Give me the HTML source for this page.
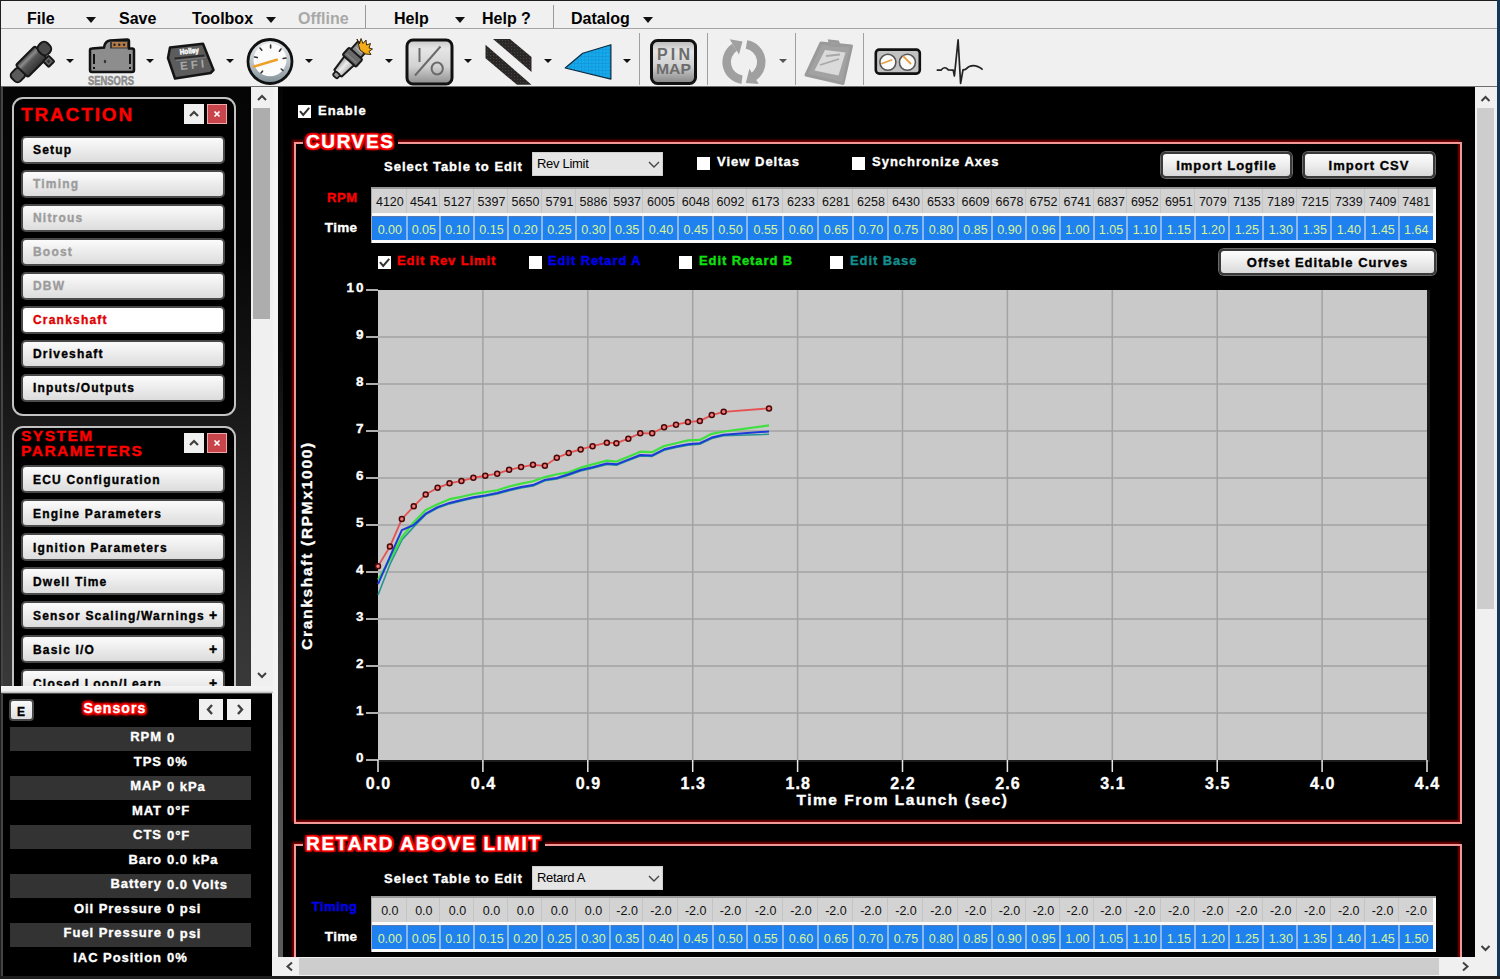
<!DOCTYPE html>
<html><head><meta charset="utf-8"><title>Traction</title>
<style>
*{box-sizing:border-box;margin:0;padding:0}
html,body{width:1500px;height:979px;overflow:hidden;background:#f0f0f0;font-family:"Liberation Sans", sans-serif;}
.a{position:absolute}
.t{position:absolute;white-space:nowrap;font-weight:bold}
.menu{font-size:16px;color:#000;top:11px;line-height:1}
.tri{position:absolute;width:0;height:0;border-left:5px solid transparent;border-right:5px solid transparent;border-top:6px solid #111}
.btn{position:absolute;left:21px;width:203px;height:26px;border:2px solid #2a2a2a;border-radius:5px;background:linear-gradient(#fdfdfd,#e9e9e9 45%,#d2d2d2);box-shadow:0 0 0 1px #6a6a6a;}
.btn span{position:absolute;left:10px;top:4px;font-size:13px;font-weight:bold;letter-spacing:0.8px;color:#000;white-space:nowrap}
.btn i{position:absolute;right:3px;top:2px;font-style:normal;font-size:16px;font-weight:bold;color:#000}
.dis span{color:#9a9a9a}
.cb{position:absolute;width:13px;height:13px;background:#fff;}
.lbl{position:absolute;white-space:nowrap;font-weight:bold;font-size:13px;letter-spacing:1px;color:#fff}
.pbtn{position:absolute;height:26px;border:2px solid #333;border-radius:5px;background:linear-gradient(#fdfdfd,#ececec 50%,#d6d6d6);box-shadow:0 0 0 1px #777;text-align:center;font-weight:bold;font-size:13px;letter-spacing:1px;color:#000;line-height:22px;white-space:nowrap}
.glow{position:absolute;white-space:nowrap;font-weight:bold;color:#fff;text-shadow:0 0 2px #f00,0 0 2px #f00,0 0 3px #e00,0 0 3px #e00,0 0 4px #c00,0 0 4px #c00}
.cell{position:absolute;text-align:center;font-size:12.5px;white-space:nowrap}
</style></head><body>

<div class="a" style="left:0;top:0;width:1500px;height:1px;background:#1e1e1e"></div>
<div class="a" style="left:0;top:0;width:1px;height:979px;background:#1e1e1e"></div>
<div class="a" style="left:1497px;top:0;width:3px;height:979px;background:#17375a"></div>
<div class="a" style="left:0;top:976px;width:1500px;height:3px;background:#1e1e1e"></div>
<div class="a" style="left:1px;top:28px;width:1496px;height:1px;background:#a5a5a5"></div>
<div class="t menu" style="left:27px;color:#000">File</div>
<div class="tri" style="left:86px;top:17px"></div>
<div class="t menu" style="left:119px;color:#000">Save</div>
<div class="t menu" style="left:192px;color:#000">Toolbox</div>
<div class="tri" style="left:266px;top:17px"></div>
<div class="t menu" style="left:298px;color:#a8a8a8">Offline</div>
<div class="t menu" style="left:394px;color:#000">Help</div>
<div class="tri" style="left:455px;top:17px"></div>
<div class="t menu" style="left:482px;color:#000">Help ?</div>
<div class="t menu" style="left:571px;color:#000">Datalog</div>
<div class="tri" style="left:643px;top:17px"></div>
<div class="a" style="left:365px;top:5px;width:1px;height:23px;background:#9a9a9a"></div>
<div class="a" style="left:553px;top:5px;width:1px;height:23px;background:#9a9a9a"></div>
<div class="a" style="left:1px;top:86px;width:1496px;height:1px;background:#6e6e6e"></div>
<div class="a" style="left:639px;top:33px;width:1px;height:52px;background:#a0a0a0"></div>
<div class="a" style="left:707px;top:33px;width:1px;height:52px;background:#a0a0a0"></div>
<div class="a" style="left:795px;top:33px;width:1px;height:52px;background:#a0a0a0"></div>
<div class="a" style="left:863px;top:33px;width:1px;height:52px;background:#a0a0a0"></div>
<div class="a" style="left:66px;top:59.2px;width:0;height:0;border-left:4.2px solid transparent;border-right:4.2px solid transparent;border-top:4.8px solid #111"></div>
<div class="a" style="left:146px;top:59.2px;width:0;height:0;border-left:4.2px solid transparent;border-right:4.2px solid transparent;border-top:4.8px solid #111"></div>
<div class="a" style="left:225.5px;top:59.2px;width:0;height:0;border-left:4.2px solid transparent;border-right:4.2px solid transparent;border-top:4.8px solid #111"></div>
<div class="a" style="left:304.5px;top:59.2px;width:0;height:0;border-left:4.2px solid transparent;border-right:4.2px solid transparent;border-top:4.8px solid #111"></div>
<div class="a" style="left:384.5px;top:59.2px;width:0;height:0;border-left:4.2px solid transparent;border-right:4.2px solid transparent;border-top:4.8px solid #111"></div>
<div class="a" style="left:464px;top:59.2px;width:0;height:0;border-left:4.2px solid transparent;border-right:4.2px solid transparent;border-top:4.8px solid #111"></div>
<div class="a" style="left:544px;top:59.2px;width:0;height:0;border-left:4.2px solid transparent;border-right:4.2px solid transparent;border-top:4.8px solid #111"></div>
<div class="a" style="left:623px;top:59.2px;width:0;height:0;border-left:4.2px solid transparent;border-right:4.2px solid transparent;border-top:4.8px solid #111"></div>
<div class="a" style="left:778.8px;top:59.2px;width:0;height:0;border-left:4.2px solid transparent;border-right:4.2px solid transparent;border-top:4.8px solid #555"></div>
<svg class="a" style="left:0;top:0" width="1000" height="87" viewBox="0 0 1000 87">
<defs>
<linearGradient id="gIO" x1="0" y1="0" x2="0" y2="1"><stop offset="0" stop-color="#c8c8c8"/><stop offset="0.2" stop-color="#e6e6e6"/><stop offset="0.6" stop-color="#d2d2d2"/><stop offset="1" stop-color="#8e8e8e"/></linearGradient>
<linearGradient id="gPin" x1="0" y1="0" x2="0" y2="1"><stop offset="0" stop-color="#b8b8b8"/><stop offset="0.25" stop-color="#e4e4e4"/><stop offset="0.6" stop-color="#cfcfcf"/><stop offset="1" stop-color="#858585"/></linearGradient>
<linearGradient id="gInj" x1="0" y1="0" x2="1" y2="0"><stop offset="0" stop-color="#3c3c3c"/><stop offset="0.25" stop-color="#8a8a8a"/><stop offset="0.45" stop-color="#555"/><stop offset="1" stop-color="#333"/></linearGradient>
<linearGradient id="gPlug" x1="0" y1="0" x2="1" y2="0"><stop offset="0" stop-color="#9a9a9a"/><stop offset="0.45" stop-color="#eeeeee"/><stop offset="1" stop-color="#b0b0b0"/></linearGradient>
<linearGradient id="gBezel" x1="0" y1="0" x2="0" y2="1"><stop offset="0" stop-color="#e8ecee"/><stop offset="0.55" stop-color="#b8c2c6"/><stop offset="1" stop-color="#7f8e94"/></linearGradient>
<pattern id="pBlue" width="3.5" height="3.5" patternUnits="userSpaceOnUse"><rect width="3.5" height="3.5" fill="#16aaec"/><path d="M0 0H3.5M0 0V3.5" stroke="#0b7cc0" stroke-width="0.6"/></pattern>
<pattern id="pStripe" width="3" height="3" patternUnits="userSpaceOnUse"><rect width="3" height="3" fill="#2b2727"/><rect x="1" y="1" width="1" height="1" fill="#444"/></pattern>
</defs>
<!-- injector -->
<g transform="translate(31,62) rotate(45)">
 <rect x="-6" y="12" width="12" height="13" rx="4" fill="#5a5a5a" stroke="#161616" stroke-width="2"/>
 <rect x="-8.5" y="-14" width="17" height="27" rx="2" fill="url(#gInj)" stroke="#161616" stroke-width="2"/>
 <rect x="-6.5" y="-25" width="13" height="12" rx="5" fill="#4a4a4a" stroke="#161616" stroke-width="2"/>
 <rect x="8" y="-17" width="8" height="8" rx="1" fill="#666" stroke="#161616" stroke-width="2"/>
 <rect x="10.5" y="-14.5" width="3" height="3" fill="#333"/>
</g>
<!-- sensor -->
<path d="M90 50 Q90 48.5 92 48.5 L104 47.5 Q105 41 110 40.5 L127 39.5 Q129 39.5 129 41.5 L129 48.5 L132 48.5 Q134 48.5 134 50.5 L134 70 Q134 72 132 72 L92 72 Q90 72 90 70 Z" fill="#8d8d8d" stroke="#111" stroke-width="2.5"/>
<rect x="110" y="41" width="18" height="7.5" fill="#3a3a3a"/>
<rect x="112" y="42" width="15" height="5.5" fill="#b47a48"/>
<circle cx="114.5" cy="44.8" r="1.2" fill="#222"/><circle cx="119.3" cy="44.8" r="1.2" fill="#222"/><circle cx="124" cy="44.8" r="1.2" fill="#222"/>
<rect x="93" y="54" width="2" height="10" fill="#111"/><rect x="129" y="54" width="2" height="10" fill="#111"/>
<rect x="93" y="67" width="2" height="2" fill="#111"/><rect x="129" y="67" width="2" height="2" fill="#111"/>
<ellipse cx="105" cy="61.5" rx="1.2" ry="1.8" fill="#333"/>
<text x="111" y="85" text-anchor="middle" font-family="Liberation Sans" font-weight="bold" font-size="12" fill="#8a8a8a" stroke="#8a8a8a" stroke-width="0.5" textLength="46" lengthAdjust="spacingAndGlyphs">SENSORS</text>
<!-- EFI box -->
<path d="M170 47.5 L203 43.8 L213.5 70 L210.5 73 L175 78.5 L168 58 Z" fill="#5c5c5c" stroke="#151515" stroke-width="2.5" stroke-linejoin="round"/>
<path d="M174.5 58.5 L204.5 55.5" stroke="#2a2a2a" stroke-width="1.8"/>
<path d="M176 60.5 L206 57.5" stroke="#888" stroke-width="0.8"/>
<text x="0" y="0" transform="translate(180,54.5) rotate(-6)" font-family="Liberation Sans" font-weight="bold" font-size="7.5" fill="#f6f6f6" stroke="#f6f6f6" stroke-width="0.6" textLength="19" lengthAdjust="spacingAndGlyphs">Holley</text>
<text x="0" y="0" transform="translate(180.5,70) rotate(-6)" font-family="Liberation Sans" font-weight="bold" font-size="11.5" fill="#a8a8a8" textLength="24" lengthAdjust="spacing">EFI</text>
<!-- gauge -->
<circle cx="270" cy="61.5" r="22" fill="url(#gBezel)" stroke="#111" stroke-width="2.8"/>
<circle cx="270" cy="59.8" r="16.5" fill="#fbfbfb"/>
<g stroke="#333" stroke-width="1.6" stroke-linecap="round">
<path d="M270.6 45 v3"/><path d="M260 48 l1.8 2.2"/><path d="M281 49 l-1.6 2.2"/><path d="M254.5 57 l2.8 0.5"/><path d="M286 58 l-2.8 0.5"/><path d="M261 73 l1.5 -1.8"/><path d="M283 70.5 l-1.8 -1.5"/>
</g>
<path d="M254 66.5 L276.8 59.8" stroke="#eea028" stroke-width="2.6" stroke-linecap="round"/>
<!-- spark plug -->
<g transform="translate(349.5,60.5) rotate(42)">
 <rect x="-6.5" y="-20" width="13" height="11" rx="1.5" fill="#8c8c8c" stroke="#1a1a1a" stroke-width="2"/>
 <path d="M-4 -17 h8 M-4 -14 h8" stroke="#bbb" stroke-width="1"/>
 <rect x="-9" y="-9.5" width="18" height="10" rx="1.5" fill="#6a6a6a" stroke="#1a1a1a" stroke-width="2"/>
 <path d="M-7 -3 h14" stroke="#8a8a8a" stroke-width="1"/>
 <path d="M-6.5 0.5 L6.5 0.5 L5 17 Q0 20 -5 17 Z" fill="url(#gPlug)" stroke="#1a1a1a" stroke-width="2"/>
 <rect x="-3" y="17" width="6" height="5" rx="1.5" fill="#9a9a9a" stroke="#1a1a1a" stroke-width="1.8"/>
</g>
<path d="M357 39 L359.5 44 L361 38.5 L363 43.5 L366 40 L366.5 45 L370.5 43.5 L369 48 L372.5 49 L369 51.5 L371 54.5 L365.5 54 L360 50 Z" fill="#f4ad18" stroke="#2a1a00" stroke-width="0.9" stroke-linejoin="round"/>
<!-- I/O -->
<rect x="407" y="40" width="45" height="44" rx="6" fill="url(#gIO)" stroke="#111" stroke-width="3"/>
<path d="M419.5 48 V62" stroke="#6a6a6a" stroke-width="2"/>
<path d="M415 75.5 L440.5 46.5" stroke="#6a6a6a" stroke-width="2"/>
<ellipse cx="437.2" cy="68.5" rx="5.6" ry="6" fill="none" stroke="#6a6a6a" stroke-width="2"/>
<!-- stripes -->
<path d="M493 39 L510 39 L531.5 57 L531.5 72 Z" fill="url(#pStripe)"/>
<path d="M485.5 44.7 L531.5 84.8 L517 84.8 L485.5 58.2 Z" fill="url(#pStripe)"/>
<!-- blue wedge -->
<path d="M565.2 68 L582.7 53.3 L610.9 44.7 L610.9 79.1 Z" fill="url(#pBlue)" stroke="#0d2a40" stroke-width="1.2" stroke-linejoin="round"/>
<!-- PIN MAP -->
<rect x="651.5" y="40.5" width="44" height="43" rx="6" fill="url(#gPin)" stroke="#111" stroke-width="3"/>
<text x="673.5" y="60" text-anchor="middle" font-family="Liberation Sans" font-weight="bold" font-size="16" fill="#6c6c6c" textLength="33" lengthAdjust="spacing">PIN</text>
<text x="673.5" y="73.8" text-anchor="middle" font-family="Liberation Sans" font-weight="bold" font-size="15.5" fill="#6c6c6c" textLength="35" lengthAdjust="spacingAndGlyphs">MAP</text>
<!-- refresh -->
<path d="M734.6 47.3 A17.75 17.75 0 0 0 742 79.7" fill="none" stroke="#a0a0a0" stroke-width="8.5"/>
<path d="M729.7 39.2 L742.5 41.5 L739 54.5 Z" fill="#a0a0a0"/>
<path d="M746.5 44.5 A17.75 17.75 0 0 1 752.5 77.3" fill="none" stroke="#a0a0a0" stroke-width="8.5"/>
<path d="M749.4 68.8 L758.8 84 L745.8 83 Z" fill="#a0a0a0"/>
<!-- clipboard -->
<path d="M821 43 L851.5 46 L843 83.5 L806 75 Z" fill="#a2a2a2" stroke="#9a9a9a" stroke-width="3" stroke-linejoin="round"/>
<path d="M825 50 L845.5 52.5 L838.5 75.5 L814.5 70.5 Z" fill="#dadada"/>
<path d="M829 40.5 L838 41.5 L840 46 L830 45.5 Z" fill="#9e9e9e" stroke="#9a9a9a" stroke-width="2"/>
<path d="M826 56 L840 54.5 M820 65 L839 59" stroke="#a8a8a8" stroke-width="1.8"/>
<!-- gauges box -->
<rect x="875.8" y="49.6" width="44" height="24" rx="3.5" fill="#c2c2c2" stroke="#111" stroke-width="2.6"/>
<circle cx="887.9" cy="62.3" r="8" fill="#fbfbfb" stroke="#555" stroke-width="1.6"/>
<circle cx="907.4" cy="62.3" r="8" fill="#fbfbfb" stroke="#555" stroke-width="1.6"/>
<path d="M882 63.5 L891.5 60 M903.5 56.5 L910.5 63.5" stroke="#e8a040" stroke-width="1.8" stroke-linecap="round"/>
<!-- ECG -->
<path d="M936.7 70.2 L941 70.2 Q944.6 65.5 948.3 69.9 L953.2 70.2 L954.4 76 L958.1 39.8 L960.6 83.4 L963 69.9 L965.5 69.3 Q972.9 62 982.7 69.6" fill="none" stroke="#222" stroke-width="1.7" stroke-linejoin="round"/>
</svg>
<div class="a" style="left:1px;top:87px;width:250px;height:599px;background:linear-gradient(#050505,#070707 26%,#121212 45%,#1a1a1a 55.6%,#333 88%,#393939);border-left:2px solid #454545"></div>
<div class="a" style="left:251px;top:87px;width:22px;height:599px;background:#f0f0f0"></div>
<div class="a" style="left:253px;top:108px;width:17px;height:211px;background:#adadad"></div>
<svg class="a" style="left:251px;top:87px" width="22" height="599"><path d="M7 13 L11 9 L15 13" fill="none" stroke="#404040" stroke-width="2"/><path d="M7 586 L11 590 L15 586" fill="none" stroke="#404040" stroke-width="2"/></svg>
<div class="a" style="left:273px;top:87px;width:5px;height:870px;background:#f4f4f4"></div>
<div class="a" style="left:278px;top:87px;width:5px;height:870px;background:linear-gradient(#040404,#0a0a0a 30%,#1a1a1a 39%,#333 55%,#555 82%,#5a5a5a)"></div>
<div class="a" style="left:12px;top:97px;width:224px;height:319px;border:2px solid #c2c2c2;border-radius:11px;background:#000"></div>
<div class="a" style="left:21px;top:105.07px;font-size:19px;line-height:1;font-weight:bold;letter-spacing:1.85px;color:#f00;white-space:nowrap;-webkit-text-stroke:0.35px #f00;">TRACTION</div>
<div class="a" style="left:184px;top:104px;width:20px;height:20px;background:#f0f0f0"></div><svg class="a" style="left:184px;top:104px" width="20" height="20"><path d="M6 12 L10 8 L14 12" fill="none" stroke="#404040" stroke-width="2.2"/></svg><div class="a" style="left:207px;top:104px;width:20px;height:20px;background:#c8454b;border:1px solid #f0a8a8"></div><svg class="a" style="left:207px;top:104px" width="20" height="20"><path d="M7.5 7.5 L12.5 12.5 M12.5 7.5 L7.5 12.5" stroke="#fff" stroke-width="1.7"/></svg>
<div class="a" style="left:21px;top:135.5px;width:204px;height:28px;border:2.5px solid #4a4a4a;border-radius:5px;background:linear-gradient(#fbfbfb,#efefef 40%,#dcdcdc)"></div><div class="a" style="left:33px;top:144.29px;font-size:12px;line-height:1;font-weight:bold;letter-spacing:1.2px;color:#000;white-space:nowrap;-webkit-text-stroke:0.35px #000;">Setup</div>
<div class="a" style="left:21px;top:169.5px;width:204px;height:28px;border:2.5px solid #4a4a4a;border-radius:5px;background:linear-gradient(#fbfbfb,#efefef 40%,#dcdcdc)"></div><div class="a" style="left:33px;top:178.29px;font-size:12px;line-height:1;font-weight:bold;letter-spacing:1.2px;color:#9c9c9c;white-space:nowrap;-webkit-text-stroke:0.35px #9c9c9c;">Timing</div>
<div class="a" style="left:21px;top:203.5px;width:204px;height:28px;border:2.5px solid #4a4a4a;border-radius:5px;background:linear-gradient(#fbfbfb,#efefef 40%,#dcdcdc)"></div><div class="a" style="left:33px;top:212.29px;font-size:12px;line-height:1;font-weight:bold;letter-spacing:1.2px;color:#9c9c9c;white-space:nowrap;-webkit-text-stroke:0.35px #9c9c9c;">Nitrous</div>
<div class="a" style="left:21px;top:237.5px;width:204px;height:28px;border:2.5px solid #4a4a4a;border-radius:5px;background:linear-gradient(#fbfbfb,#efefef 40%,#dcdcdc)"></div><div class="a" style="left:33px;top:246.29px;font-size:12px;line-height:1;font-weight:bold;letter-spacing:1.2px;color:#9c9c9c;white-space:nowrap;-webkit-text-stroke:0.35px #9c9c9c;">Boost</div>
<div class="a" style="left:21px;top:271.5px;width:204px;height:28px;border:2.5px solid #4a4a4a;border-radius:5px;background:linear-gradient(#fbfbfb,#efefef 40%,#dcdcdc)"></div><div class="a" style="left:33px;top:280.29px;font-size:12px;line-height:1;font-weight:bold;letter-spacing:1.2px;color:#9c9c9c;white-space:nowrap;-webkit-text-stroke:0.35px #9c9c9c;">DBW</div>
<div class="a" style="left:21px;top:305.5px;width:204px;height:28px;border:2.5px solid #4a4a4a;border-radius:5px;background:#fff"></div><div class="a" style="left:33px;top:314.29px;font-size:12px;line-height:1;font-weight:bold;letter-spacing:1.2px;color:#e00000;white-space:nowrap;-webkit-text-stroke:0.35px #e00000;">Crankshaft</div>
<div class="a" style="left:21px;top:339.5px;width:204px;height:28px;border:2.5px solid #4a4a4a;border-radius:5px;background:linear-gradient(#fbfbfb,#efefef 40%,#dcdcdc)"></div><div class="a" style="left:33px;top:348.29px;font-size:12px;line-height:1;font-weight:bold;letter-spacing:1.2px;color:#000;white-space:nowrap;-webkit-text-stroke:0.35px #000;">Driveshaft</div>
<div class="a" style="left:21px;top:373.5px;width:204px;height:28px;border:2.5px solid #4a4a4a;border-radius:5px;background:linear-gradient(#fbfbfb,#efefef 40%,#dcdcdc)"></div><div class="a" style="left:33px;top:382.29px;font-size:12px;line-height:1;font-weight:bold;letter-spacing:1.2px;color:#000;white-space:nowrap;-webkit-text-stroke:0.35px #000;">Inputs/Outputs</div>
<div class="a" style="left:12px;top:426px;width:224px;height:300px;border:2px solid #c2c2c2;border-radius:11px;background:#000"></div>
<div class="a" style="left:21px;top:427.98px;font-size:15.5px;line-height:1;font-weight:bold;letter-spacing:1.5px;color:#f00;white-space:nowrap;-webkit-text-stroke:0.35px #f00;">SYSTEM</div>
<div class="a" style="left:21px;top:443.18px;font-size:15.5px;line-height:1;font-weight:bold;letter-spacing:1.5px;color:#f00;white-space:nowrap;-webkit-text-stroke:0.35px #f00;">PARAMETERS</div>
<div class="a" style="left:184px;top:433px;width:20px;height:20px;background:#f0f0f0"></div><svg class="a" style="left:184px;top:433px" width="20" height="20"><path d="M6 12 L10 8 L14 12" fill="none" stroke="#404040" stroke-width="2.2"/></svg><div class="a" style="left:207px;top:433px;width:20px;height:20px;background:#c8454b;border:1px solid #f0a8a8"></div><svg class="a" style="left:207px;top:433px" width="20" height="20"><path d="M7.5 7.5 L12.5 12.5 M12.5 7.5 L7.5 12.5" stroke="#fff" stroke-width="1.7"/></svg>
<div class="a" style="left:21px;top:464.8px;width:204px;height:28px;border:2.5px solid #4a4a4a;border-radius:5px;background:linear-gradient(#fbfbfb,#efefef 40%,#dcdcdc)"></div><div class="a" style="left:33px;top:473.59px;font-size:12px;line-height:1;font-weight:bold;letter-spacing:1.2px;color:#000;white-space:nowrap;-webkit-text-stroke:0.35px #000;">ECU Configuration</div>
<div class="a" style="left:21px;top:498.8px;width:204px;height:28px;border:2.5px solid #4a4a4a;border-radius:5px;background:linear-gradient(#fbfbfb,#efefef 40%,#dcdcdc)"></div><div class="a" style="left:33px;top:507.59px;font-size:12px;line-height:1;font-weight:bold;letter-spacing:1.2px;color:#000;white-space:nowrap;-webkit-text-stroke:0.35px #000;">Engine Parameters</div>
<div class="a" style="left:21px;top:532.8px;width:204px;height:28px;border:2.5px solid #4a4a4a;border-radius:5px;background:linear-gradient(#fbfbfb,#efefef 40%,#dcdcdc)"></div><div class="a" style="left:33px;top:541.59px;font-size:12px;line-height:1;font-weight:bold;letter-spacing:1.2px;color:#000;white-space:nowrap;-webkit-text-stroke:0.35px #000;">Ignition Parameters</div>
<div class="a" style="left:21px;top:566.8px;width:204px;height:28px;border:2.5px solid #4a4a4a;border-radius:5px;background:linear-gradient(#fbfbfb,#efefef 40%,#dcdcdc)"></div><div class="a" style="left:33px;top:575.59px;font-size:12px;line-height:1;font-weight:bold;letter-spacing:1.2px;color:#000;white-space:nowrap;-webkit-text-stroke:0.35px #000;">Dwell Time</div>
<div class="a" style="left:21px;top:600.8px;width:204px;height:28px;border:2.5px solid #4a4a4a;border-radius:5px;background:linear-gradient(#fbfbfb,#efefef 40%,#dcdcdc)"></div><div class="a" style="left:33px;top:609.59px;font-size:12px;line-height:1;font-weight:bold;letter-spacing:1.2px;color:#000;white-space:nowrap;-webkit-text-stroke:0.35px #000;">Sensor Scaling/Warnings</div><div class="a" style="left:209px;top:608.15px;font-size:14px;line-height:1;font-weight:bold;letter-spacing:0px;color:#000;white-space:nowrap;-webkit-text-stroke:0.35px #000;">+</div>
<div class="a" style="left:21px;top:634.8px;width:204px;height:28px;border:2.5px solid #4a4a4a;border-radius:5px;background:linear-gradient(#fbfbfb,#efefef 40%,#dcdcdc)"></div><div class="a" style="left:33px;top:643.59px;font-size:12px;line-height:1;font-weight:bold;letter-spacing:1.2px;color:#000;white-space:nowrap;-webkit-text-stroke:0.35px #000;">Basic I/O</div><div class="a" style="left:209px;top:642.15px;font-size:14px;line-height:1;font-weight:bold;letter-spacing:0px;color:#000;white-space:nowrap;-webkit-text-stroke:0.35px #000;">+</div>
<div class="a" style="left:21px;top:668.8px;width:204px;height:28px;border:2.5px solid #4a4a4a;border-radius:5px;background:linear-gradient(#fbfbfb,#efefef 40%,#dcdcdc)"></div><div class="a" style="left:33px;top:677.59px;font-size:12px;line-height:1;font-weight:bold;letter-spacing:1.2px;color:#000;white-space:nowrap;-webkit-text-stroke:0.35px #000;">Closed Loop/Learn</div><div class="a" style="left:209px;top:676.15px;font-size:14px;line-height:1;font-weight:bold;letter-spacing:0px;color:#000;white-space:nowrap;-webkit-text-stroke:0.35px #000;">+</div>
<div class="a" style="left:1px;top:686px;width:272px;height:7px;background:linear-gradient(#f4f4f4,#f0f0f0 70%,#b0b0b0)"></div>
<div class="a" style="left:1px;top:693px;width:271px;height:283px;background:#000;border-left:2px solid #444;border-top:1px solid #4a4a4a"></div>
<div class="a" style="left:9px;top:699px;width:25px;height:22px;border:2px solid #4a4a4a;border-radius:4px;background:linear-gradient(#fafafa,#e0e0e0)"></div>
<div class="a" style="left:17px;top:705.59px;font-size:12px;line-height:1;font-weight:bold;letter-spacing:0px;color:#000;white-space:nowrap;-webkit-text-stroke:0.35px #000;">E</div>
<div class="a" style="left:83.5px;top:700.56px;font-size:14px;line-height:1;font-weight:bold;letter-spacing:1.1px;color:#fff;white-space:nowrap;-webkit-text-stroke:0.35px #fff;text-shadow:1px 0 0 #f00,-1px 0 0 #f00,0 1px 0 #f00,0 -1px 0 #f00,1px 1px 0 #f00,-1px -1px 0 #f00,1px -1px 0 #f00,-1px 1px 0 #f00,2px 0 2px #f00,-2px 0 2px #f00,0 2px 2px #f00,0 -2px 2px #f00,2px 2px 2px #e00,-2px -2px 2px #e00,2px -2px 2px #e00,-2px 2px 2px #e00,0 0 6px #b00">Sensors</div>
<div class="a" style="left:199px;top:699px;width:24px;height:21px;background:#f0f0f0"></div>
<svg class="a" style="left:199px;top:699px" width="24" height="21"><path d="M13 6 L9 10.5 L13 15" fill="none" stroke="#404040" stroke-width="2.4"/></svg>
<div class="a" style="left:227px;top:699px;width:24px;height:21px;background:#f0f0f0"></div>
<svg class="a" style="left:227px;top:699px" width="24" height="21"><path d="M11 6 L15 10.5 L11 15" fill="none" stroke="#404040" stroke-width="2.4"/></svg>
<div class="a" style="left:10px;top:726.5px;width:241px;height:24px;background:#333"></div>
<div class="a" style="right:1338.05px;top:730.17px;font-size:13px;line-height:1;font-weight:bold;letter-spacing:0.95px;color:#fff;white-space:nowrap;-webkit-text-stroke:0.35px #fff;">RPM</div>
<div class="a" style="left:167px;top:730.97px;font-size:13px;line-height:1;font-weight:bold;letter-spacing:0.95px;color:#fff;white-space:nowrap;-webkit-text-stroke:0.35px #fff;">0</div>
<div class="a" style="right:1338.05px;top:754.67px;font-size:13px;line-height:1;font-weight:bold;letter-spacing:0.95px;color:#fff;white-space:nowrap;-webkit-text-stroke:0.35px #fff;">TPS</div>
<div class="a" style="left:167px;top:755.47px;font-size:13px;line-height:1;font-weight:bold;letter-spacing:0.95px;color:#fff;white-space:nowrap;-webkit-text-stroke:0.35px #fff;">0%</div>
<div class="a" style="left:10px;top:775.5px;width:241px;height:24px;background:#333"></div>
<div class="a" style="right:1338.05px;top:779.17px;font-size:13px;line-height:1;font-weight:bold;letter-spacing:0.95px;color:#fff;white-space:nowrap;-webkit-text-stroke:0.35px #fff;">MAP</div>
<div class="a" style="left:167px;top:779.97px;font-size:13px;line-height:1;font-weight:bold;letter-spacing:0.95px;color:#fff;white-space:nowrap;-webkit-text-stroke:0.35px #fff;">0 kPa</div>
<div class="a" style="right:1338.05px;top:803.67px;font-size:13px;line-height:1;font-weight:bold;letter-spacing:0.95px;color:#fff;white-space:nowrap;-webkit-text-stroke:0.35px #fff;">MAT</div>
<div class="a" style="left:167px;top:804.47px;font-size:13px;line-height:1;font-weight:bold;letter-spacing:0.95px;color:#fff;white-space:nowrap;-webkit-text-stroke:0.35px #fff;">0°F</div>
<div class="a" style="left:10px;top:824.5px;width:241px;height:24px;background:#333"></div>
<div class="a" style="right:1338.05px;top:828.17px;font-size:13px;line-height:1;font-weight:bold;letter-spacing:0.95px;color:#fff;white-space:nowrap;-webkit-text-stroke:0.35px #fff;">CTS</div>
<div class="a" style="left:167px;top:828.97px;font-size:13px;line-height:1;font-weight:bold;letter-spacing:0.95px;color:#fff;white-space:nowrap;-webkit-text-stroke:0.35px #fff;">0°F</div>
<div class="a" style="right:1338.05px;top:852.67px;font-size:13px;line-height:1;font-weight:bold;letter-spacing:0.95px;color:#fff;white-space:nowrap;-webkit-text-stroke:0.35px #fff;">Baro</div>
<div class="a" style="left:167px;top:853.47px;font-size:13px;line-height:1;font-weight:bold;letter-spacing:0.95px;color:#fff;white-space:nowrap;-webkit-text-stroke:0.35px #fff;">0.0 kPa</div>
<div class="a" style="left:10px;top:873.5px;width:241px;height:24px;background:#333"></div>
<div class="a" style="right:1338.05px;top:877.17px;font-size:13px;line-height:1;font-weight:bold;letter-spacing:0.95px;color:#fff;white-space:nowrap;-webkit-text-stroke:0.35px #fff;">Battery</div>
<div class="a" style="left:167px;top:877.97px;font-size:13px;line-height:1;font-weight:bold;letter-spacing:0.95px;color:#fff;white-space:nowrap;-webkit-text-stroke:0.35px #fff;">0.0 Volts</div>
<div class="a" style="right:1338.05px;top:901.67px;font-size:13px;line-height:1;font-weight:bold;letter-spacing:0.95px;color:#fff;white-space:nowrap;-webkit-text-stroke:0.35px #fff;">Oil Pressure</div>
<div class="a" style="left:167px;top:902.47px;font-size:13px;line-height:1;font-weight:bold;letter-spacing:0.95px;color:#fff;white-space:nowrap;-webkit-text-stroke:0.35px #fff;">0 psi</div>
<div class="a" style="left:10px;top:922.5px;width:241px;height:24px;background:#333"></div>
<div class="a" style="right:1338.05px;top:926.17px;font-size:13px;line-height:1;font-weight:bold;letter-spacing:0.95px;color:#fff;white-space:nowrap;-webkit-text-stroke:0.35px #fff;">Fuel Pressure</div>
<div class="a" style="left:167px;top:926.97px;font-size:13px;line-height:1;font-weight:bold;letter-spacing:0.95px;color:#fff;white-space:nowrap;-webkit-text-stroke:0.35px #fff;">0 psi</div>
<div class="a" style="right:1338.05px;top:950.67px;font-size:13px;line-height:1;font-weight:bold;letter-spacing:0.95px;color:#fff;white-space:nowrap;-webkit-text-stroke:0.35px #fff;">IAC Position</div>
<div class="a" style="left:167px;top:951.47px;font-size:13px;line-height:1;font-weight:bold;letter-spacing:0.95px;color:#fff;white-space:nowrap;-webkit-text-stroke:0.35px #fff;">0%</div>
<div class="a" style="left:283px;top:87px;width:1192px;height:870px;background:#000"></div>
<div class="a" style="left:1475px;top:87px;width:22px;height:889px;background:#f0f0f0"></div>
<div class="a" style="left:1477px;top:108px;width:17px;height:501px;background:#cdcdcd"></div>
<svg class="a" style="left:1475px;top:87px" width="22" height="870"><path d="M6.5 14 L10.5 10 L14.5 14" fill="none" stroke="#404040" stroke-width="2"/><path d="M6.5 859 L10.5 863 L14.5 859" fill="none" stroke="#404040" stroke-width="2"/></svg>
<div class="a" style="left:279px;top:957px;width:1196px;height:19px;background:#f0f0f0"></div>
<div class="a" style="left:299px;top:958px;width:1140px;height:17px;background:#cdcdcd"></div>
<svg class="a" style="left:279px;top:957px" width="1196" height="19"><path d="M13 5.5 L8.5 9.5 L13 13.5" fill="none" stroke="#404040" stroke-width="2"/><path d="M1184 5.5 L1188.5 9.5 L1184 13.5" fill="none" stroke="#404040" stroke-width="2"/></svg>
<div class="a" style="left:283px;top:87px;width:1192px;height:870px;overflow:hidden"><div class="a" style="left:-283px;top:-87px;width:1500px;height:979px">
<div class="a" style="left:298px;top:105px;width:13px;height:13px;background:#fff"></div><svg class="a" style="left:298px;top:105px" width="13" height="13"><path d="M2 6.2 L5.2 10 L11.2 2.8" fill="none" stroke="#333" stroke-width="2"/></svg>
<div class="a" style="left:318px;top:103.77px;font-size:13px;line-height:1;font-weight:bold;letter-spacing:1px;color:#fff;white-space:nowrap;-webkit-text-stroke:0.35px #fff;">Enable</div>
<div class="a" style="left:294px;top:142px;width:1168px;height:682px;border:2px solid #f09898;box-shadow:-2px -2px 2px 0 #780000, inset -2px -2px 2px 0 #780000"></div><div class="a" style="left:303px;top:130px;width:95px;height:24px;background:#000"></div>
<div class="a" style="left:306px;top:131.97px;font-size:19px;line-height:1;font-weight:bold;letter-spacing:1.6px;color:#fff;white-space:nowrap;-webkit-text-stroke:0.35px #fff;text-shadow:1px 0 0 #f00,-1px 0 0 #f00,0 1px 0 #f00,0 -1px 0 #f00,1px 1px 0 #f00,-1px -1px 0 #f00,1px -1px 0 #f00,-1px 1px 0 #f00,2px 0 1px #e00,-2px 0 1px #e00,0 2px 1px #e00,0 -2px 1px #e00,2px 2px 1px #d00,-2px -2px 1px #d00,2px -2px 1px #d00,-2px 2px 1px #d00,0 0 5px #a00">CURVES</div>
<div class="a" style="left:294px;top:844px;width:1168px;height:256px;border:2px solid #f09898;box-shadow:-2px -2px 2px 0 #780000, inset -2px -2px 2px 0 #780000"></div><div class="a" style="left:303px;top:832px;width:242px;height:24px;background:#000"></div>
<div class="a" style="left:306px;top:834.27px;font-size:19px;line-height:1;font-weight:bold;letter-spacing:1.72px;color:#fff;white-space:nowrap;-webkit-text-stroke:0.35px #fff;text-shadow:1px 0 0 #f00,-1px 0 0 #f00,0 1px 0 #f00,0 -1px 0 #f00,1px 1px 0 #f00,-1px -1px 0 #f00,1px -1px 0 #f00,-1px 1px 0 #f00,2px 0 1px #e00,-2px 0 1px #e00,0 2px 1px #e00,0 -2px 1px #e00,2px 2px 1px #d00,-2px -2px 1px #d00,2px -2px 1px #d00,-2px 2px 1px #d00,0 0 5px #a00">RETARD ABOVE LIMIT</div>
<div class="a" style="left:384px;top:160.47px;font-size:13px;line-height:1;font-weight:bold;letter-spacing:1px;color:#fff;white-space:nowrap;-webkit-text-stroke:0.35px #fff;">Select Table to Edit</div>
<div class="a" style="left:532px;top:152.4px;width:131px;height:24px;background:#e5e5e5;border:1px solid #cfcfcf"></div><div class="a" style="left:537px;top:157.37px;font-size:13px;line-height:1;font-weight:normal;letter-spacing:-0.3px;color:#000;white-space:nowrap;">Rev Limit</div><svg class="a" style="left:647px;top:158.4px" width="14" height="12"><path d="M2 4 L7 9 L12 4" fill="none" stroke="#444" stroke-width="1.4"/></svg>
<div class="a" style="left:697px;top:157px;width:13px;height:13px;background:#fff"></div>
<div class="a" style="left:717px;top:155.47px;font-size:13px;line-height:1;font-weight:bold;letter-spacing:1px;color:#fff;white-space:nowrap;-webkit-text-stroke:0.35px #fff;">View Deltas</div>
<div class="a" style="left:852px;top:157px;width:13px;height:13px;background:#fff"></div>
<div class="a" style="left:872px;top:155.47px;font-size:13px;line-height:1;font-weight:bold;letter-spacing:1px;color:#fff;white-space:nowrap;-webkit-text-stroke:0.35px #fff;">Synchronize Axes</div>
<div class="a" style="left:1161px;top:152px;width:131px;height:26px;border:2px solid #3a3a3a;border-radius:5px;background:linear-gradient(#fdfdfd,#efefef 45%,#d9d9d9);box-shadow:0 0 0 1px #6a6a6a"></div><div class="a" style="left:1226.5px;transform:translateX(-50%);top:159.47px;font-size:13px;line-height:1;font-weight:bold;letter-spacing:1px;color:#000;white-space:nowrap;-webkit-text-stroke:0.35px #000;">Import Logfile</div>
<div class="a" style="left:1303px;top:152px;width:132px;height:26px;border:2px solid #3a3a3a;border-radius:5px;background:linear-gradient(#fdfdfd,#efefef 45%,#d9d9d9);box-shadow:0 0 0 1px #6a6a6a"></div><div class="a" style="left:1369.0px;transform:translateX(-50%);top:159.47px;font-size:13px;line-height:1;font-weight:bold;letter-spacing:1px;color:#000;white-space:nowrap;-webkit-text-stroke:0.35px #000;">Import CSV</div>
<div class="a" style="left:1219px;top:249px;width:217px;height:26px;border:2px solid #3a3a3a;border-radius:5px;background:linear-gradient(#fdfdfd,#efefef 45%,#d9d9d9);box-shadow:0 0 0 1px #6a6a6a"></div><div class="a" style="left:1327.5px;transform:translateX(-50%);top:256.47px;font-size:13px;line-height:1;font-weight:bold;letter-spacing:1px;color:#000;white-space:nowrap;-webkit-text-stroke:0.35px #000;">Offset Editable Curves</div>
<div class="a" style="left:371px;top:187px;width:1065px;height:56px;background:#fafafa;border-top:2px solid #9a9a9a;border-left:1px solid #a8a8a8"></div><div class="a" style="left:372px;top:189px;width:1060.5px;height:23.5px;background:#d3d3d3"></div><div class="a" style="left:372px;top:216px;width:1060.5px;height:23.5px;background:#1f80f0;border-top:1px solid #5a7ab0"></div><div class="a" style="left:405.7px;top:189px;width:1px;height:23.5px;background:#c4c4c4"></div><div class="a" style="left:405.7px;top:216px;width:2px;height:23.5px;background:#8ab8ee"></div><div class="a" style="left:439.0px;top:189px;width:1px;height:23.5px;background:#c4c4c4"></div><div class="a" style="left:439.0px;top:216px;width:2px;height:23.5px;background:#8ab8ee"></div><div class="a" style="left:473.0px;top:189px;width:1px;height:23.5px;background:#c4c4c4"></div><div class="a" style="left:473.0px;top:216px;width:2px;height:23.5px;background:#8ab8ee"></div><div class="a" style="left:507.0px;top:189px;width:1px;height:23.5px;background:#c4c4c4"></div><div class="a" style="left:507.0px;top:216px;width:2px;height:23.5px;background:#8ab8ee"></div><div class="a" style="left:541.0px;top:189px;width:1px;height:23.5px;background:#c4c4c4"></div><div class="a" style="left:541.0px;top:216px;width:2px;height:23.5px;background:#8ab8ee"></div><div class="a" style="left:575.0px;top:189px;width:1px;height:23.5px;background:#c4c4c4"></div><div class="a" style="left:575.0px;top:216px;width:2px;height:23.5px;background:#8ab8ee"></div><div class="a" style="left:609.0px;top:189px;width:1px;height:23.5px;background:#c4c4c4"></div><div class="a" style="left:609.0px;top:216px;width:2px;height:23.5px;background:#8ab8ee"></div><div class="a" style="left:642.3px;top:189px;width:1px;height:23.5px;background:#c4c4c4"></div><div class="a" style="left:642.3px;top:216px;width:2px;height:23.5px;background:#8ab8ee"></div><div class="a" style="left:676.7px;top:189px;width:1px;height:23.5px;background:#c4c4c4"></div><div class="a" style="left:676.7px;top:216px;width:2px;height:23.5px;background:#8ab8ee"></div><div class="a" style="left:711.7px;top:189px;width:1px;height:23.5px;background:#c4c4c4"></div><div class="a" style="left:711.7px;top:216px;width:2px;height:23.5px;background:#8ab8ee"></div><div class="a" style="left:746.3px;top:189px;width:1px;height:23.5px;background:#c4c4c4"></div><div class="a" style="left:746.3px;top:216px;width:2px;height:23.5px;background:#8ab8ee"></div><div class="a" style="left:782.0px;top:189px;width:1px;height:23.5px;background:#c4c4c4"></div><div class="a" style="left:782.0px;top:216px;width:2px;height:23.5px;background:#8ab8ee"></div><div class="a" style="left:817.0px;top:189px;width:1px;height:23.5px;background:#c4c4c4"></div><div class="a" style="left:817.0px;top:216px;width:2px;height:23.5px;background:#8ab8ee"></div><div class="a" style="left:851.9px;top:189px;width:1px;height:23.5px;background:#c4c4c4"></div><div class="a" style="left:851.9px;top:216px;width:2px;height:23.5px;background:#8ab8ee"></div><div class="a" style="left:887.0px;top:189px;width:1px;height:23.5px;background:#c4c4c4"></div><div class="a" style="left:887.0px;top:216px;width:2px;height:23.5px;background:#8ab8ee"></div><div class="a" style="left:922.0px;top:189px;width:1px;height:23.5px;background:#c4c4c4"></div><div class="a" style="left:922.0px;top:216px;width:2px;height:23.5px;background:#8ab8ee"></div><div class="a" style="left:957.0px;top:189px;width:1px;height:23.5px;background:#c4c4c4"></div><div class="a" style="left:957.0px;top:216px;width:2px;height:23.5px;background:#8ab8ee"></div><div class="a" style="left:991.0px;top:189px;width:1px;height:23.5px;background:#c4c4c4"></div><div class="a" style="left:991.0px;top:216px;width:2px;height:23.5px;background:#8ab8ee"></div><div class="a" style="left:1025.0px;top:189px;width:1px;height:23.5px;background:#c4c4c4"></div><div class="a" style="left:1025.0px;top:216px;width:2px;height:23.5px;background:#8ab8ee"></div><div class="a" style="left:1059.0px;top:189px;width:1px;height:23.5px;background:#c4c4c4"></div><div class="a" style="left:1059.0px;top:216px;width:2px;height:23.5px;background:#8ab8ee"></div><div class="a" style="left:1092.7px;top:189px;width:1px;height:23.5px;background:#c4c4c4"></div><div class="a" style="left:1092.7px;top:216px;width:2px;height:23.5px;background:#8ab8ee"></div><div class="a" style="left:1126.3px;top:189px;width:1px;height:23.5px;background:#c4c4c4"></div><div class="a" style="left:1126.3px;top:216px;width:2px;height:23.5px;background:#8ab8ee"></div><div class="a" style="left:1160.3px;top:189px;width:1px;height:23.5px;background:#c4c4c4"></div><div class="a" style="left:1160.3px;top:216px;width:2px;height:23.5px;background:#8ab8ee"></div><div class="a" style="left:1194.3px;top:189px;width:1px;height:23.5px;background:#c4c4c4"></div><div class="a" style="left:1194.3px;top:216px;width:2px;height:23.5px;background:#8ab8ee"></div><div class="a" style="left:1228.3px;top:189px;width:1px;height:23.5px;background:#c4c4c4"></div><div class="a" style="left:1228.3px;top:216px;width:2px;height:23.5px;background:#8ab8ee"></div><div class="a" style="left:1262.3px;top:189px;width:1px;height:23.5px;background:#c4c4c4"></div><div class="a" style="left:1262.3px;top:216px;width:2px;height:23.5px;background:#8ab8ee"></div><div class="a" style="left:1296.3px;top:189px;width:1px;height:23.5px;background:#c4c4c4"></div><div class="a" style="left:1296.3px;top:216px;width:2px;height:23.5px;background:#8ab8ee"></div><div class="a" style="left:1330.3px;top:189px;width:1px;height:23.5px;background:#c4c4c4"></div><div class="a" style="left:1330.3px;top:216px;width:2px;height:23.5px;background:#8ab8ee"></div><div class="a" style="left:1364.3px;top:189px;width:1px;height:23.5px;background:#c4c4c4"></div><div class="a" style="left:1364.3px;top:216px;width:2px;height:23.5px;background:#8ab8ee"></div><div class="a" style="left:1398.0px;top:189px;width:1px;height:23.5px;background:#c4c4c4"></div><div class="a" style="left:1398.0px;top:216px;width:2px;height:23.5px;background:#8ab8ee"></div><div class="a" style="left:389.85px;transform:translateX(-50%);top:195.53px;font-size:12.5px;line-height:1;font-weight:normal;letter-spacing:0px;color:#111;white-space:nowrap;">4120</div><div class="a" style="left:423.85px;transform:translateX(-50%);top:195.53px;font-size:12.5px;line-height:1;font-weight:normal;letter-spacing:0px;color:#111;white-space:nowrap;">4541</div><div class="a" style="left:457.5px;transform:translateX(-50%);top:195.53px;font-size:12.5px;line-height:1;font-weight:normal;letter-spacing:0px;color:#111;white-space:nowrap;">5127</div><div class="a" style="left:491.5px;transform:translateX(-50%);top:195.53px;font-size:12.5px;line-height:1;font-weight:normal;letter-spacing:0px;color:#111;white-space:nowrap;">5397</div><div class="a" style="left:525.5px;transform:translateX(-50%);top:195.53px;font-size:12.5px;line-height:1;font-weight:normal;letter-spacing:0px;color:#111;white-space:nowrap;">5650</div><div class="a" style="left:559.5px;transform:translateX(-50%);top:195.53px;font-size:12.5px;line-height:1;font-weight:normal;letter-spacing:0px;color:#111;white-space:nowrap;">5791</div><div class="a" style="left:593.5px;transform:translateX(-50%);top:195.53px;font-size:12.5px;line-height:1;font-weight:normal;letter-spacing:0px;color:#111;white-space:nowrap;">5886</div><div class="a" style="left:627.15px;transform:translateX(-50%);top:195.53px;font-size:12.5px;line-height:1;font-weight:normal;letter-spacing:0px;color:#111;white-space:nowrap;">5937</div><div class="a" style="left:661.0px;transform:translateX(-50%);top:195.53px;font-size:12.5px;line-height:1;font-weight:normal;letter-spacing:0px;color:#111;white-space:nowrap;">6005</div><div class="a" style="left:695.7px;transform:translateX(-50%);top:195.53px;font-size:12.5px;line-height:1;font-weight:normal;letter-spacing:0px;color:#111;white-space:nowrap;">6048</div><div class="a" style="left:730.5px;transform:translateX(-50%);top:195.53px;font-size:12.5px;line-height:1;font-weight:normal;letter-spacing:0px;color:#111;white-space:nowrap;">6092</div><div class="a" style="left:765.65px;transform:translateX(-50%);top:195.53px;font-size:12.5px;line-height:1;font-weight:normal;letter-spacing:0px;color:#111;white-space:nowrap;">6173</div><div class="a" style="left:801.0px;transform:translateX(-50%);top:195.53px;font-size:12.5px;line-height:1;font-weight:normal;letter-spacing:0px;color:#111;white-space:nowrap;">6233</div><div class="a" style="left:835.95px;transform:translateX(-50%);top:195.53px;font-size:12.5px;line-height:1;font-weight:normal;letter-spacing:0px;color:#111;white-space:nowrap;">6281</div><div class="a" style="left:870.95px;transform:translateX(-50%);top:195.53px;font-size:12.5px;line-height:1;font-weight:normal;letter-spacing:0px;color:#111;white-space:nowrap;">6258</div><div class="a" style="left:906.0px;transform:translateX(-50%);top:195.53px;font-size:12.5px;line-height:1;font-weight:normal;letter-spacing:0px;color:#111;white-space:nowrap;">6430</div><div class="a" style="left:941.0px;transform:translateX(-50%);top:195.53px;font-size:12.5px;line-height:1;font-weight:normal;letter-spacing:0px;color:#111;white-space:nowrap;">6533</div><div class="a" style="left:975.5px;transform:translateX(-50%);top:195.53px;font-size:12.5px;line-height:1;font-weight:normal;letter-spacing:0px;color:#111;white-space:nowrap;">6609</div><div class="a" style="left:1009.5px;transform:translateX(-50%);top:195.53px;font-size:12.5px;line-height:1;font-weight:normal;letter-spacing:0px;color:#111;white-space:nowrap;">6678</div><div class="a" style="left:1043.5px;transform:translateX(-50%);top:195.53px;font-size:12.5px;line-height:1;font-weight:normal;letter-spacing:0px;color:#111;white-space:nowrap;">6752</div><div class="a" style="left:1077.35px;transform:translateX(-50%);top:195.53px;font-size:12.5px;line-height:1;font-weight:normal;letter-spacing:0px;color:#111;white-space:nowrap;">6741</div><div class="a" style="left:1111.0px;transform:translateX(-50%);top:195.53px;font-size:12.5px;line-height:1;font-weight:normal;letter-spacing:0px;color:#111;white-space:nowrap;">6837</div><div class="a" style="left:1144.8px;transform:translateX(-50%);top:195.53px;font-size:12.5px;line-height:1;font-weight:normal;letter-spacing:0px;color:#111;white-space:nowrap;">6952</div><div class="a" style="left:1178.8px;transform:translateX(-50%);top:195.53px;font-size:12.5px;line-height:1;font-weight:normal;letter-spacing:0px;color:#111;white-space:nowrap;">6951</div><div class="a" style="left:1212.8px;transform:translateX(-50%);top:195.53px;font-size:12.5px;line-height:1;font-weight:normal;letter-spacing:0px;color:#111;white-space:nowrap;">7079</div><div class="a" style="left:1246.8px;transform:translateX(-50%);top:195.53px;font-size:12.5px;line-height:1;font-weight:normal;letter-spacing:0px;color:#111;white-space:nowrap;">7135</div><div class="a" style="left:1280.8px;transform:translateX(-50%);top:195.53px;font-size:12.5px;line-height:1;font-weight:normal;letter-spacing:0px;color:#111;white-space:nowrap;">7189</div><div class="a" style="left:1314.8px;transform:translateX(-50%);top:195.53px;font-size:12.5px;line-height:1;font-weight:normal;letter-spacing:0px;color:#111;white-space:nowrap;">7215</div><div class="a" style="left:1348.8px;transform:translateX(-50%);top:195.53px;font-size:12.5px;line-height:1;font-weight:normal;letter-spacing:0px;color:#111;white-space:nowrap;">7339</div><div class="a" style="left:1382.65px;transform:translateX(-50%);top:195.53px;font-size:12.5px;line-height:1;font-weight:normal;letter-spacing:0px;color:#111;white-space:nowrap;">7409</div><div class="a" style="left:1416.25px;transform:translateX(-50%);top:195.53px;font-size:12.5px;line-height:1;font-weight:normal;letter-spacing:0px;color:#111;white-space:nowrap;">7481</div><div class="a" style="left:389.85px;transform:translateX(-50%);top:224.03px;font-size:12.5px;line-height:1;font-weight:normal;letter-spacing:0px;color:#d8f59a;white-space:nowrap;">0.00</div><div class="a" style="left:423.85px;transform:translateX(-50%);top:224.03px;font-size:12.5px;line-height:1;font-weight:normal;letter-spacing:0px;color:#d8f59a;white-space:nowrap;">0.05</div><div class="a" style="left:457.5px;transform:translateX(-50%);top:224.03px;font-size:12.5px;line-height:1;font-weight:normal;letter-spacing:0px;color:#d8f59a;white-space:nowrap;">0.10</div><div class="a" style="left:491.5px;transform:translateX(-50%);top:224.03px;font-size:12.5px;line-height:1;font-weight:normal;letter-spacing:0px;color:#d8f59a;white-space:nowrap;">0.15</div><div class="a" style="left:525.5px;transform:translateX(-50%);top:224.03px;font-size:12.5px;line-height:1;font-weight:normal;letter-spacing:0px;color:#d8f59a;white-space:nowrap;">0.20</div><div class="a" style="left:559.5px;transform:translateX(-50%);top:224.03px;font-size:12.5px;line-height:1;font-weight:normal;letter-spacing:0px;color:#d8f59a;white-space:nowrap;">0.25</div><div class="a" style="left:593.5px;transform:translateX(-50%);top:224.03px;font-size:12.5px;line-height:1;font-weight:normal;letter-spacing:0px;color:#d8f59a;white-space:nowrap;">0.30</div><div class="a" style="left:627.15px;transform:translateX(-50%);top:224.03px;font-size:12.5px;line-height:1;font-weight:normal;letter-spacing:0px;color:#d8f59a;white-space:nowrap;">0.35</div><div class="a" style="left:661.0px;transform:translateX(-50%);top:224.03px;font-size:12.5px;line-height:1;font-weight:normal;letter-spacing:0px;color:#d8f59a;white-space:nowrap;">0.40</div><div class="a" style="left:695.7px;transform:translateX(-50%);top:224.03px;font-size:12.5px;line-height:1;font-weight:normal;letter-spacing:0px;color:#d8f59a;white-space:nowrap;">0.45</div><div class="a" style="left:730.5px;transform:translateX(-50%);top:224.03px;font-size:12.5px;line-height:1;font-weight:normal;letter-spacing:0px;color:#d8f59a;white-space:nowrap;">0.50</div><div class="a" style="left:765.65px;transform:translateX(-50%);top:224.03px;font-size:12.5px;line-height:1;font-weight:normal;letter-spacing:0px;color:#d8f59a;white-space:nowrap;">0.55</div><div class="a" style="left:801.0px;transform:translateX(-50%);top:224.03px;font-size:12.5px;line-height:1;font-weight:normal;letter-spacing:0px;color:#d8f59a;white-space:nowrap;">0.60</div><div class="a" style="left:835.95px;transform:translateX(-50%);top:224.03px;font-size:12.5px;line-height:1;font-weight:normal;letter-spacing:0px;color:#d8f59a;white-space:nowrap;">0.65</div><div class="a" style="left:870.95px;transform:translateX(-50%);top:224.03px;font-size:12.5px;line-height:1;font-weight:normal;letter-spacing:0px;color:#d8f59a;white-space:nowrap;">0.70</div><div class="a" style="left:906.0px;transform:translateX(-50%);top:224.03px;font-size:12.5px;line-height:1;font-weight:normal;letter-spacing:0px;color:#d8f59a;white-space:nowrap;">0.75</div><div class="a" style="left:941.0px;transform:translateX(-50%);top:224.03px;font-size:12.5px;line-height:1;font-weight:normal;letter-spacing:0px;color:#d8f59a;white-space:nowrap;">0.80</div><div class="a" style="left:975.5px;transform:translateX(-50%);top:224.03px;font-size:12.5px;line-height:1;font-weight:normal;letter-spacing:0px;color:#d8f59a;white-space:nowrap;">0.85</div><div class="a" style="left:1009.5px;transform:translateX(-50%);top:224.03px;font-size:12.5px;line-height:1;font-weight:normal;letter-spacing:0px;color:#d8f59a;white-space:nowrap;">0.90</div><div class="a" style="left:1043.5px;transform:translateX(-50%);top:224.03px;font-size:12.5px;line-height:1;font-weight:normal;letter-spacing:0px;color:#d8f59a;white-space:nowrap;">0.96</div><div class="a" style="left:1077.35px;transform:translateX(-50%);top:224.03px;font-size:12.5px;line-height:1;font-weight:normal;letter-spacing:0px;color:#d8f59a;white-space:nowrap;">1.00</div><div class="a" style="left:1111.0px;transform:translateX(-50%);top:224.03px;font-size:12.5px;line-height:1;font-weight:normal;letter-spacing:0px;color:#d8f59a;white-space:nowrap;">1.05</div><div class="a" style="left:1144.8px;transform:translateX(-50%);top:224.03px;font-size:12.5px;line-height:1;font-weight:normal;letter-spacing:0px;color:#d8f59a;white-space:nowrap;">1.10</div><div class="a" style="left:1178.8px;transform:translateX(-50%);top:224.03px;font-size:12.5px;line-height:1;font-weight:normal;letter-spacing:0px;color:#d8f59a;white-space:nowrap;">1.15</div><div class="a" style="left:1212.8px;transform:translateX(-50%);top:224.03px;font-size:12.5px;line-height:1;font-weight:normal;letter-spacing:0px;color:#d8f59a;white-space:nowrap;">1.20</div><div class="a" style="left:1246.8px;transform:translateX(-50%);top:224.03px;font-size:12.5px;line-height:1;font-weight:normal;letter-spacing:0px;color:#d8f59a;white-space:nowrap;">1.25</div><div class="a" style="left:1280.8px;transform:translateX(-50%);top:224.03px;font-size:12.5px;line-height:1;font-weight:normal;letter-spacing:0px;color:#d8f59a;white-space:nowrap;">1.30</div><div class="a" style="left:1314.8px;transform:translateX(-50%);top:224.03px;font-size:12.5px;line-height:1;font-weight:normal;letter-spacing:0px;color:#d8f59a;white-space:nowrap;">1.35</div><div class="a" style="left:1348.8px;transform:translateX(-50%);top:224.03px;font-size:12.5px;line-height:1;font-weight:normal;letter-spacing:0px;color:#d8f59a;white-space:nowrap;">1.40</div><div class="a" style="left:1382.65px;transform:translateX(-50%);top:224.03px;font-size:12.5px;line-height:1;font-weight:normal;letter-spacing:0px;color:#d8f59a;white-space:nowrap;">1.45</div><div class="a" style="left:1416.25px;transform:translateX(-50%);top:224.03px;font-size:12.5px;line-height:1;font-weight:normal;letter-spacing:0px;color:#d8f59a;white-space:nowrap;">1.64</div><div class="a" style="right:1142.4px;top:191.27px;font-size:13px;line-height:1;font-weight:bold;letter-spacing:0.6px;color:#f00;white-space:nowrap;-webkit-text-stroke:0.35px #f00;">RPM</div><div class="a" style="right:1142.7px;top:220.91px;font-size:13.5px;line-height:1;font-weight:bold;letter-spacing:0.3px;color:#fff;white-space:nowrap;-webkit-text-stroke:0.35px #fff;">Time</div>
<div class="a" style="left:378px;top:256px;width:13px;height:13px;background:#fff"></div><svg class="a" style="left:378px;top:256px" width="13" height="13"><path d="M2 6.2 L5.2 10 L11.2 2.8" fill="none" stroke="#333" stroke-width="2"/></svg>
<div class="a" style="left:397px;top:254.47px;font-size:13px;line-height:1;font-weight:bold;letter-spacing:0.9px;color:#f00;white-space:nowrap;-webkit-text-stroke:0.35px #f00;">Edit Rev Limit</div>
<div class="a" style="left:529px;top:256px;width:13px;height:13px;background:#fff"></div>
<div class="a" style="left:548px;top:254.47px;font-size:13px;line-height:1;font-weight:bold;letter-spacing:0.9px;color:#0000f0;white-space:nowrap;-webkit-text-stroke:0.35px #0000f0;">Edit Retard A</div>
<div class="a" style="left:679px;top:256px;width:13px;height:13px;background:#fff"></div>
<div class="a" style="left:699px;top:254.47px;font-size:13px;line-height:1;font-weight:bold;letter-spacing:0.9px;color:#10e010;white-space:nowrap;-webkit-text-stroke:0.35px #10e010;">Edit Retard B</div>
<div class="a" style="left:830px;top:256px;width:13px;height:13px;background:#fff"></div>
<div class="a" style="left:850px;top:254.47px;font-size:13px;line-height:1;font-weight:bold;letter-spacing:0.9px;color:#138f8f;white-space:nowrap;-webkit-text-stroke:0.35px #138f8f;">Edit Base</div>
<svg class="a" style="left:0;top:0" width="1500" height="979" viewBox="0 0 1500 979"><rect x="378" y="290" width="1049" height="470" fill="#c9c9c9"/><rect x="1427" y="290" width="3" height="472" fill="#1c1c1c"/><rect x="378" y="760" width="1052" height="2" fill="#1c1c1c"/><rect x="378" y="336.25" width="1049" height="1.5" fill="#a3a3a3"/><rect x="378" y="383.25" width="1049" height="1.5" fill="#a3a3a3"/><rect x="378" y="430.25" width="1049" height="1.5" fill="#a3a3a3"/><rect x="378" y="477.25" width="1049" height="1.5" fill="#a3a3a3"/><rect x="378" y="524.25" width="1049" height="1.5" fill="#a3a3a3"/><rect x="378" y="571.25" width="1049" height="1.5" fill="#a3a3a3"/><rect x="378" y="618.25" width="1049" height="1.5" fill="#a3a3a3"/><rect x="378" y="665.25" width="1049" height="1.5" fill="#a3a3a3"/><rect x="378" y="712.25" width="1049" height="1.5" fill="#a3a3a3"/><rect x="482.15" y="290" width="1.5" height="470" fill="#a3a3a3"/><rect x="587.05" y="290" width="1.5" height="470" fill="#a3a3a3"/><rect x="691.95" y="290" width="1.5" height="470" fill="#a3a3a3"/><rect x="796.85" y="290" width="1.5" height="470" fill="#a3a3a3"/><rect x="901.75" y="290" width="1.5" height="470" fill="#a3a3a3"/><rect x="1006.65" y="290" width="1.5" height="470" fill="#a3a3a3"/><rect x="1111.55" y="290" width="1.5" height="470" fill="#a3a3a3"/><rect x="1216.45" y="290" width="1.5" height="470" fill="#a3a3a3"/><rect x="1321.35" y="290" width="1.5" height="470" fill="#a3a3a3"/><rect x="366" y="759.25" width="12" height="1.5" fill="#e8e8e8"/><rect x="377.25" y="760" width="1.5" height="12" fill="#e8e8e8"/><rect x="366" y="712.25" width="12" height="1.5" fill="#e8e8e8"/><rect x="482.15" y="760" width="1.5" height="12" fill="#e8e8e8"/><rect x="366" y="665.25" width="12" height="1.5" fill="#e8e8e8"/><rect x="587.05" y="760" width="1.5" height="12" fill="#e8e8e8"/><rect x="366" y="618.25" width="12" height="1.5" fill="#e8e8e8"/><rect x="691.95" y="760" width="1.5" height="12" fill="#e8e8e8"/><rect x="366" y="571.25" width="12" height="1.5" fill="#e8e8e8"/><rect x="796.85" y="760" width="1.5" height="12" fill="#e8e8e8"/><rect x="366" y="524.25" width="12" height="1.5" fill="#e8e8e8"/><rect x="901.75" y="760" width="1.5" height="12" fill="#e8e8e8"/><rect x="366" y="477.25" width="12" height="1.5" fill="#e8e8e8"/><rect x="1006.65" y="760" width="1.5" height="12" fill="#e8e8e8"/><rect x="366" y="430.25" width="12" height="1.5" fill="#e8e8e8"/><rect x="1111.55" y="760" width="1.5" height="12" fill="#e8e8e8"/><rect x="366" y="383.25" width="12" height="1.5" fill="#e8e8e8"/><rect x="1216.45" y="760" width="1.5" height="12" fill="#e8e8e8"/><rect x="366" y="336.25" width="12" height="1.5" fill="#e8e8e8"/><rect x="1321.35" y="760" width="1.5" height="12" fill="#e8e8e8"/><rect x="366" y="289.25" width="12" height="1.5" fill="#e8e8e8"/><rect x="1426.25" y="760" width="1.5" height="12" fill="#e8e8e8"/><g font-family="Liberation Sans" font-weight="bold" fill="#fff" stroke="#fff" stroke-width="0.35"><text x="365.5" y="762.20" text-anchor="end" font-size="13.5" letter-spacing="2">0</text><text x="365.5" y="715.20" text-anchor="end" font-size="13.5" letter-spacing="2">1</text><text x="365.5" y="668.20" text-anchor="end" font-size="13.5" letter-spacing="2">2</text><text x="365.5" y="621.20" text-anchor="end" font-size="13.5" letter-spacing="2">3</text><text x="365.5" y="574.20" text-anchor="end" font-size="13.5" letter-spacing="2">4</text><text x="365.5" y="527.20" text-anchor="end" font-size="13.5" letter-spacing="2">5</text><text x="365.5" y="480.20" text-anchor="end" font-size="13.5" letter-spacing="2">6</text><text x="365.5" y="433.20" text-anchor="end" font-size="13.5" letter-spacing="2">7</text><text x="365.5" y="386.20" text-anchor="end" font-size="13.5" letter-spacing="2">8</text><text x="365.5" y="339.20" text-anchor="end" font-size="13.5" letter-spacing="2">9</text><text x="365.5" y="292.20" text-anchor="end" font-size="13.5" letter-spacing="2">10</text><text x="378.60" y="788.6" text-anchor="middle" font-size="16" letter-spacing="1.1">0.0</text><text x="483.50" y="788.6" text-anchor="middle" font-size="16" letter-spacing="1.1">0.4</text><text x="588.40" y="788.6" text-anchor="middle" font-size="16" letter-spacing="1.1">0.9</text><text x="693.30" y="788.6" text-anchor="middle" font-size="16" letter-spacing="1.1">1.3</text><text x="798.20" y="788.6" text-anchor="middle" font-size="16" letter-spacing="1.1">1.8</text><text x="903.10" y="788.6" text-anchor="middle" font-size="16" letter-spacing="1.1">2.2</text><text x="1008.00" y="788.6" text-anchor="middle" font-size="16" letter-spacing="1.1">2.6</text><text x="1112.90" y="788.6" text-anchor="middle" font-size="16" letter-spacing="1.1">3.1</text><text x="1217.80" y="788.6" text-anchor="middle" font-size="16" letter-spacing="1.1">3.5</text><text x="1322.70" y="788.6" text-anchor="middle" font-size="16" letter-spacing="1.1">4.0</text><text x="1427.60" y="788.6" text-anchor="middle" font-size="16" letter-spacing="1.1">4.4</text><text x="902.5" y="805" text-anchor="middle" font-size="15.5" letter-spacing="1.5">Time From Launch (sec)</text><text x="0" y="0" transform="translate(312,545.5) rotate(-90)" text-anchor="middle" font-size="15.5" letter-spacing="1.7">Crankshaft (RPMx1000)</text></g><polyline points="378.00,595.03 389.92,564.48 401.84,540.04 413.76,526.88 425.68,514.66 437.60,508.08 449.52,503.85 461.44,501.03 473.36,498.21 485.28,496.33 497.20,493.98 509.12,490.69 521.05,487.87 532.97,485.99 544.89,480.82 556.81,478.94 568.73,475.18 580.65,470.95 592.57,468.13 606.87,464.37 616.41,465.31 628.33,460.61 640.25,455.91 652.17,456.38 664.09,450.27 676.01,447.45 687.93,445.10 699.85,444.16 711.77,438.52 723.69,435.70 768.99,434.29" fill="none" stroke="#279393" stroke-width="1.6" stroke-linejoin="round"/><polyline points="378.00,579.52 389.92,559.78 401.84,537.22 413.76,522.18 425.68,509.96 437.60,504.32 449.52,499.15 461.44,496.80 473.36,493.98 485.28,492.10 497.20,490.22 509.12,486.46 521.05,483.64 532.97,481.29 544.89,477.06 556.81,474.24 568.73,472.36 580.65,467.66 592.57,464.37 606.87,460.61 616.41,461.55 628.33,456.85 640.25,451.68 652.17,452.15 664.09,446.04 676.01,443.22 687.93,440.40 699.85,439.93 711.77,433.82 723.69,431.47 768.99,425.36" fill="none" stroke="#3fe03f" stroke-width="2.2" stroke-linejoin="round"/><polyline points="378.00,584.22 389.92,556.96 401.84,530.17 413.76,525.00 425.68,513.72 437.60,507.14 449.52,502.91 461.44,500.09 473.36,497.27 485.28,495.39 497.20,493.04 509.12,489.75 521.05,486.93 532.97,485.05 544.89,479.88 556.81,478.00 568.73,474.24 580.65,470.01 592.57,467.19 606.87,463.43 616.41,464.37 628.33,459.67 640.25,454.97 652.17,455.44 664.09,449.33 676.01,446.51 687.93,444.16 699.85,443.22 711.77,437.58 723.69,434.76 768.99,431.47" fill="none" stroke="#1c3ad8" stroke-width="2" stroke-linejoin="round"/><polyline points="378.00,566.36 389.92,546.57 401.84,519.03 413.76,506.34 425.68,494.45 437.60,487.82 449.52,483.36 461.44,480.96 473.36,477.76 485.28,475.74 497.20,473.68 509.12,469.87 521.05,467.05 532.97,464.79 544.89,465.87 556.81,457.79 568.73,452.95 580.65,449.38 592.57,446.13 606.87,442.66 616.41,443.17 628.33,438.66 640.25,433.26 652.17,433.30 664.09,427.29 676.01,424.65 687.93,422.12 699.85,420.89 711.77,415.07 723.69,411.78 768.99,408.39" fill="none" stroke="#e65252" stroke-width="1.8" stroke-linejoin="round"/><circle cx="378.00" cy="566.36" r="2.5" fill="#f27a7a" stroke="#4a0808" stroke-width="1.5"/><circle cx="389.92" cy="546.57" r="2.5" fill="#f27a7a" stroke="#4a0808" stroke-width="1.5"/><circle cx="401.84" cy="519.03" r="2.5" fill="#f27a7a" stroke="#4a0808" stroke-width="1.5"/><circle cx="413.76" cy="506.34" r="2.5" fill="#f27a7a" stroke="#4a0808" stroke-width="1.5"/><circle cx="425.68" cy="494.45" r="2.5" fill="#f27a7a" stroke="#4a0808" stroke-width="1.5"/><circle cx="437.60" cy="487.82" r="2.5" fill="#f27a7a" stroke="#4a0808" stroke-width="1.5"/><circle cx="449.52" cy="483.36" r="2.5" fill="#f27a7a" stroke="#4a0808" stroke-width="1.5"/><circle cx="461.44" cy="480.96" r="2.5" fill="#f27a7a" stroke="#4a0808" stroke-width="1.5"/><circle cx="473.36" cy="477.76" r="2.5" fill="#f27a7a" stroke="#4a0808" stroke-width="1.5"/><circle cx="485.28" cy="475.74" r="2.5" fill="#f27a7a" stroke="#4a0808" stroke-width="1.5"/><circle cx="497.20" cy="473.68" r="2.5" fill="#f27a7a" stroke="#4a0808" stroke-width="1.5"/><circle cx="509.12" cy="469.87" r="2.5" fill="#f27a7a" stroke="#4a0808" stroke-width="1.5"/><circle cx="521.05" cy="467.05" r="2.5" fill="#f27a7a" stroke="#4a0808" stroke-width="1.5"/><circle cx="532.97" cy="464.79" r="2.5" fill="#f27a7a" stroke="#4a0808" stroke-width="1.5"/><circle cx="544.89" cy="465.87" r="2.5" fill="#f27a7a" stroke="#4a0808" stroke-width="1.5"/><circle cx="556.81" cy="457.79" r="2.5" fill="#f27a7a" stroke="#4a0808" stroke-width="1.5"/><circle cx="568.73" cy="452.95" r="2.5" fill="#f27a7a" stroke="#4a0808" stroke-width="1.5"/><circle cx="580.65" cy="449.38" r="2.5" fill="#f27a7a" stroke="#4a0808" stroke-width="1.5"/><circle cx="592.57" cy="446.13" r="2.5" fill="#f27a7a" stroke="#4a0808" stroke-width="1.5"/><circle cx="606.87" cy="442.66" r="2.5" fill="#f27a7a" stroke="#4a0808" stroke-width="1.5"/><circle cx="616.41" cy="443.17" r="2.5" fill="#f27a7a" stroke="#4a0808" stroke-width="1.5"/><circle cx="628.33" cy="438.66" r="2.5" fill="#f27a7a" stroke="#4a0808" stroke-width="1.5"/><circle cx="640.25" cy="433.26" r="2.5" fill="#f27a7a" stroke="#4a0808" stroke-width="1.5"/><circle cx="652.17" cy="433.30" r="2.5" fill="#f27a7a" stroke="#4a0808" stroke-width="1.5"/><circle cx="664.09" cy="427.29" r="2.5" fill="#f27a7a" stroke="#4a0808" stroke-width="1.5"/><circle cx="676.01" cy="424.65" r="2.5" fill="#f27a7a" stroke="#4a0808" stroke-width="1.5"/><circle cx="687.93" cy="422.12" r="2.5" fill="#f27a7a" stroke="#4a0808" stroke-width="1.5"/><circle cx="699.85" cy="420.89" r="2.5" fill="#f27a7a" stroke="#4a0808" stroke-width="1.5"/><circle cx="711.77" cy="415.07" r="2.5" fill="#f27a7a" stroke="#4a0808" stroke-width="1.5"/><circle cx="723.69" cy="411.78" r="2.5" fill="#f27a7a" stroke="#4a0808" stroke-width="1.5"/><circle cx="768.99" cy="408.39" r="2.5" fill="#f27a7a" stroke="#4a0808" stroke-width="1.5"/></svg>
<div class="a" style="left:384px;top:872.47px;font-size:13px;line-height:1;font-weight:bold;letter-spacing:1px;color:#fff;white-space:nowrap;-webkit-text-stroke:0.35px #fff;">Select Table to Edit</div>
<div class="a" style="left:532px;top:866px;width:131px;height:24px;background:#e5e5e5;border:1px solid #cfcfcf"></div><div class="a" style="left:537px;top:870.97px;font-size:13px;line-height:1;font-weight:normal;letter-spacing:-0.3px;color:#000;white-space:nowrap;">Retard A</div><svg class="a" style="left:647px;top:872px" width="14" height="12"><path d="M2 4 L7 9 L12 4" fill="none" stroke="#444" stroke-width="1.4"/></svg>
<div class="a" style="left:371px;top:896px;width:1065px;height:56px;background:#fafafa;border-top:2px solid #9a9a9a;border-left:1px solid #a8a8a8"></div><div class="a" style="left:372px;top:898px;width:1060.5px;height:23.5px;background:#d3d3d3"></div><div class="a" style="left:372px;top:925px;width:1060.5px;height:23.5px;background:#1f80f0;border-top:1px solid #5a7ab0"></div><div class="a" style="left:405.7px;top:898px;width:1px;height:23.5px;background:#c4c4c4"></div><div class="a" style="left:405.7px;top:925px;width:2px;height:23.5px;background:#8ab8ee"></div><div class="a" style="left:439.0px;top:898px;width:1px;height:23.5px;background:#c4c4c4"></div><div class="a" style="left:439.0px;top:925px;width:2px;height:23.5px;background:#8ab8ee"></div><div class="a" style="left:473.0px;top:898px;width:1px;height:23.5px;background:#c4c4c4"></div><div class="a" style="left:473.0px;top:925px;width:2px;height:23.5px;background:#8ab8ee"></div><div class="a" style="left:507.0px;top:898px;width:1px;height:23.5px;background:#c4c4c4"></div><div class="a" style="left:507.0px;top:925px;width:2px;height:23.5px;background:#8ab8ee"></div><div class="a" style="left:541.0px;top:898px;width:1px;height:23.5px;background:#c4c4c4"></div><div class="a" style="left:541.0px;top:925px;width:2px;height:23.5px;background:#8ab8ee"></div><div class="a" style="left:575.0px;top:898px;width:1px;height:23.5px;background:#c4c4c4"></div><div class="a" style="left:575.0px;top:925px;width:2px;height:23.5px;background:#8ab8ee"></div><div class="a" style="left:609.0px;top:898px;width:1px;height:23.5px;background:#c4c4c4"></div><div class="a" style="left:609.0px;top:925px;width:2px;height:23.5px;background:#8ab8ee"></div><div class="a" style="left:642.3px;top:898px;width:1px;height:23.5px;background:#c4c4c4"></div><div class="a" style="left:642.3px;top:925px;width:2px;height:23.5px;background:#8ab8ee"></div><div class="a" style="left:676.7px;top:898px;width:1px;height:23.5px;background:#c4c4c4"></div><div class="a" style="left:676.7px;top:925px;width:2px;height:23.5px;background:#8ab8ee"></div><div class="a" style="left:711.7px;top:898px;width:1px;height:23.5px;background:#c4c4c4"></div><div class="a" style="left:711.7px;top:925px;width:2px;height:23.5px;background:#8ab8ee"></div><div class="a" style="left:746.3px;top:898px;width:1px;height:23.5px;background:#c4c4c4"></div><div class="a" style="left:746.3px;top:925px;width:2px;height:23.5px;background:#8ab8ee"></div><div class="a" style="left:782.0px;top:898px;width:1px;height:23.5px;background:#c4c4c4"></div><div class="a" style="left:782.0px;top:925px;width:2px;height:23.5px;background:#8ab8ee"></div><div class="a" style="left:817.0px;top:898px;width:1px;height:23.5px;background:#c4c4c4"></div><div class="a" style="left:817.0px;top:925px;width:2px;height:23.5px;background:#8ab8ee"></div><div class="a" style="left:851.9px;top:898px;width:1px;height:23.5px;background:#c4c4c4"></div><div class="a" style="left:851.9px;top:925px;width:2px;height:23.5px;background:#8ab8ee"></div><div class="a" style="left:887.0px;top:898px;width:1px;height:23.5px;background:#c4c4c4"></div><div class="a" style="left:887.0px;top:925px;width:2px;height:23.5px;background:#8ab8ee"></div><div class="a" style="left:922.0px;top:898px;width:1px;height:23.5px;background:#c4c4c4"></div><div class="a" style="left:922.0px;top:925px;width:2px;height:23.5px;background:#8ab8ee"></div><div class="a" style="left:957.0px;top:898px;width:1px;height:23.5px;background:#c4c4c4"></div><div class="a" style="left:957.0px;top:925px;width:2px;height:23.5px;background:#8ab8ee"></div><div class="a" style="left:991.0px;top:898px;width:1px;height:23.5px;background:#c4c4c4"></div><div class="a" style="left:991.0px;top:925px;width:2px;height:23.5px;background:#8ab8ee"></div><div class="a" style="left:1025.0px;top:898px;width:1px;height:23.5px;background:#c4c4c4"></div><div class="a" style="left:1025.0px;top:925px;width:2px;height:23.5px;background:#8ab8ee"></div><div class="a" style="left:1059.0px;top:898px;width:1px;height:23.5px;background:#c4c4c4"></div><div class="a" style="left:1059.0px;top:925px;width:2px;height:23.5px;background:#8ab8ee"></div><div class="a" style="left:1092.7px;top:898px;width:1px;height:23.5px;background:#c4c4c4"></div><div class="a" style="left:1092.7px;top:925px;width:2px;height:23.5px;background:#8ab8ee"></div><div class="a" style="left:1126.3px;top:898px;width:1px;height:23.5px;background:#c4c4c4"></div><div class="a" style="left:1126.3px;top:925px;width:2px;height:23.5px;background:#8ab8ee"></div><div class="a" style="left:1160.3px;top:898px;width:1px;height:23.5px;background:#c4c4c4"></div><div class="a" style="left:1160.3px;top:925px;width:2px;height:23.5px;background:#8ab8ee"></div><div class="a" style="left:1194.3px;top:898px;width:1px;height:23.5px;background:#c4c4c4"></div><div class="a" style="left:1194.3px;top:925px;width:2px;height:23.5px;background:#8ab8ee"></div><div class="a" style="left:1228.3px;top:898px;width:1px;height:23.5px;background:#c4c4c4"></div><div class="a" style="left:1228.3px;top:925px;width:2px;height:23.5px;background:#8ab8ee"></div><div class="a" style="left:1262.3px;top:898px;width:1px;height:23.5px;background:#c4c4c4"></div><div class="a" style="left:1262.3px;top:925px;width:2px;height:23.5px;background:#8ab8ee"></div><div class="a" style="left:1296.3px;top:898px;width:1px;height:23.5px;background:#c4c4c4"></div><div class="a" style="left:1296.3px;top:925px;width:2px;height:23.5px;background:#8ab8ee"></div><div class="a" style="left:1330.3px;top:898px;width:1px;height:23.5px;background:#c4c4c4"></div><div class="a" style="left:1330.3px;top:925px;width:2px;height:23.5px;background:#8ab8ee"></div><div class="a" style="left:1364.3px;top:898px;width:1px;height:23.5px;background:#c4c4c4"></div><div class="a" style="left:1364.3px;top:925px;width:2px;height:23.5px;background:#8ab8ee"></div><div class="a" style="left:1398.0px;top:898px;width:1px;height:23.5px;background:#c4c4c4"></div><div class="a" style="left:1398.0px;top:925px;width:2px;height:23.5px;background:#8ab8ee"></div><div class="a" style="left:389.85px;transform:translateX(-50%);top:904.53px;font-size:12.5px;line-height:1;font-weight:normal;letter-spacing:0px;color:#111;white-space:nowrap;">0.0</div><div class="a" style="left:423.85px;transform:translateX(-50%);top:904.53px;font-size:12.5px;line-height:1;font-weight:normal;letter-spacing:0px;color:#111;white-space:nowrap;">0.0</div><div class="a" style="left:457.5px;transform:translateX(-50%);top:904.53px;font-size:12.5px;line-height:1;font-weight:normal;letter-spacing:0px;color:#111;white-space:nowrap;">0.0</div><div class="a" style="left:491.5px;transform:translateX(-50%);top:904.53px;font-size:12.5px;line-height:1;font-weight:normal;letter-spacing:0px;color:#111;white-space:nowrap;">0.0</div><div class="a" style="left:525.5px;transform:translateX(-50%);top:904.53px;font-size:12.5px;line-height:1;font-weight:normal;letter-spacing:0px;color:#111;white-space:nowrap;">0.0</div><div class="a" style="left:559.5px;transform:translateX(-50%);top:904.53px;font-size:12.5px;line-height:1;font-weight:normal;letter-spacing:0px;color:#111;white-space:nowrap;">0.0</div><div class="a" style="left:593.5px;transform:translateX(-50%);top:904.53px;font-size:12.5px;line-height:1;font-weight:normal;letter-spacing:0px;color:#111;white-space:nowrap;">0.0</div><div class="a" style="left:627.15px;transform:translateX(-50%);top:904.53px;font-size:12.5px;line-height:1;font-weight:normal;letter-spacing:0px;color:#111;white-space:nowrap;">-2.0</div><div class="a" style="left:661.0px;transform:translateX(-50%);top:904.53px;font-size:12.5px;line-height:1;font-weight:normal;letter-spacing:0px;color:#111;white-space:nowrap;">-2.0</div><div class="a" style="left:695.7px;transform:translateX(-50%);top:904.53px;font-size:12.5px;line-height:1;font-weight:normal;letter-spacing:0px;color:#111;white-space:nowrap;">-2.0</div><div class="a" style="left:730.5px;transform:translateX(-50%);top:904.53px;font-size:12.5px;line-height:1;font-weight:normal;letter-spacing:0px;color:#111;white-space:nowrap;">-2.0</div><div class="a" style="left:765.65px;transform:translateX(-50%);top:904.53px;font-size:12.5px;line-height:1;font-weight:normal;letter-spacing:0px;color:#111;white-space:nowrap;">-2.0</div><div class="a" style="left:801.0px;transform:translateX(-50%);top:904.53px;font-size:12.5px;line-height:1;font-weight:normal;letter-spacing:0px;color:#111;white-space:nowrap;">-2.0</div><div class="a" style="left:835.95px;transform:translateX(-50%);top:904.53px;font-size:12.5px;line-height:1;font-weight:normal;letter-spacing:0px;color:#111;white-space:nowrap;">-2.0</div><div class="a" style="left:870.95px;transform:translateX(-50%);top:904.53px;font-size:12.5px;line-height:1;font-weight:normal;letter-spacing:0px;color:#111;white-space:nowrap;">-2.0</div><div class="a" style="left:906.0px;transform:translateX(-50%);top:904.53px;font-size:12.5px;line-height:1;font-weight:normal;letter-spacing:0px;color:#111;white-space:nowrap;">-2.0</div><div class="a" style="left:941.0px;transform:translateX(-50%);top:904.53px;font-size:12.5px;line-height:1;font-weight:normal;letter-spacing:0px;color:#111;white-space:nowrap;">-2.0</div><div class="a" style="left:975.5px;transform:translateX(-50%);top:904.53px;font-size:12.5px;line-height:1;font-weight:normal;letter-spacing:0px;color:#111;white-space:nowrap;">-2.0</div><div class="a" style="left:1009.5px;transform:translateX(-50%);top:904.53px;font-size:12.5px;line-height:1;font-weight:normal;letter-spacing:0px;color:#111;white-space:nowrap;">-2.0</div><div class="a" style="left:1043.5px;transform:translateX(-50%);top:904.53px;font-size:12.5px;line-height:1;font-weight:normal;letter-spacing:0px;color:#111;white-space:nowrap;">-2.0</div><div class="a" style="left:1077.35px;transform:translateX(-50%);top:904.53px;font-size:12.5px;line-height:1;font-weight:normal;letter-spacing:0px;color:#111;white-space:nowrap;">-2.0</div><div class="a" style="left:1111.0px;transform:translateX(-50%);top:904.53px;font-size:12.5px;line-height:1;font-weight:normal;letter-spacing:0px;color:#111;white-space:nowrap;">-2.0</div><div class="a" style="left:1144.8px;transform:translateX(-50%);top:904.53px;font-size:12.5px;line-height:1;font-weight:normal;letter-spacing:0px;color:#111;white-space:nowrap;">-2.0</div><div class="a" style="left:1178.8px;transform:translateX(-50%);top:904.53px;font-size:12.5px;line-height:1;font-weight:normal;letter-spacing:0px;color:#111;white-space:nowrap;">-2.0</div><div class="a" style="left:1212.8px;transform:translateX(-50%);top:904.53px;font-size:12.5px;line-height:1;font-weight:normal;letter-spacing:0px;color:#111;white-space:nowrap;">-2.0</div><div class="a" style="left:1246.8px;transform:translateX(-50%);top:904.53px;font-size:12.5px;line-height:1;font-weight:normal;letter-spacing:0px;color:#111;white-space:nowrap;">-2.0</div><div class="a" style="left:1280.8px;transform:translateX(-50%);top:904.53px;font-size:12.5px;line-height:1;font-weight:normal;letter-spacing:0px;color:#111;white-space:nowrap;">-2.0</div><div class="a" style="left:1314.8px;transform:translateX(-50%);top:904.53px;font-size:12.5px;line-height:1;font-weight:normal;letter-spacing:0px;color:#111;white-space:nowrap;">-2.0</div><div class="a" style="left:1348.8px;transform:translateX(-50%);top:904.53px;font-size:12.5px;line-height:1;font-weight:normal;letter-spacing:0px;color:#111;white-space:nowrap;">-2.0</div><div class="a" style="left:1382.65px;transform:translateX(-50%);top:904.53px;font-size:12.5px;line-height:1;font-weight:normal;letter-spacing:0px;color:#111;white-space:nowrap;">-2.0</div><div class="a" style="left:1416.25px;transform:translateX(-50%);top:904.53px;font-size:12.5px;line-height:1;font-weight:normal;letter-spacing:0px;color:#111;white-space:nowrap;">-2.0</div><div class="a" style="left:389.85px;transform:translateX(-50%);top:933.03px;font-size:12.5px;line-height:1;font-weight:normal;letter-spacing:0px;color:#d8f59a;white-space:nowrap;">0.00</div><div class="a" style="left:423.85px;transform:translateX(-50%);top:933.03px;font-size:12.5px;line-height:1;font-weight:normal;letter-spacing:0px;color:#d8f59a;white-space:nowrap;">0.05</div><div class="a" style="left:457.5px;transform:translateX(-50%);top:933.03px;font-size:12.5px;line-height:1;font-weight:normal;letter-spacing:0px;color:#d8f59a;white-space:nowrap;">0.10</div><div class="a" style="left:491.5px;transform:translateX(-50%);top:933.03px;font-size:12.5px;line-height:1;font-weight:normal;letter-spacing:0px;color:#d8f59a;white-space:nowrap;">0.15</div><div class="a" style="left:525.5px;transform:translateX(-50%);top:933.03px;font-size:12.5px;line-height:1;font-weight:normal;letter-spacing:0px;color:#d8f59a;white-space:nowrap;">0.20</div><div class="a" style="left:559.5px;transform:translateX(-50%);top:933.03px;font-size:12.5px;line-height:1;font-weight:normal;letter-spacing:0px;color:#d8f59a;white-space:nowrap;">0.25</div><div class="a" style="left:593.5px;transform:translateX(-50%);top:933.03px;font-size:12.5px;line-height:1;font-weight:normal;letter-spacing:0px;color:#d8f59a;white-space:nowrap;">0.30</div><div class="a" style="left:627.15px;transform:translateX(-50%);top:933.03px;font-size:12.5px;line-height:1;font-weight:normal;letter-spacing:0px;color:#d8f59a;white-space:nowrap;">0.35</div><div class="a" style="left:661.0px;transform:translateX(-50%);top:933.03px;font-size:12.5px;line-height:1;font-weight:normal;letter-spacing:0px;color:#d8f59a;white-space:nowrap;">0.40</div><div class="a" style="left:695.7px;transform:translateX(-50%);top:933.03px;font-size:12.5px;line-height:1;font-weight:normal;letter-spacing:0px;color:#d8f59a;white-space:nowrap;">0.45</div><div class="a" style="left:730.5px;transform:translateX(-50%);top:933.03px;font-size:12.5px;line-height:1;font-weight:normal;letter-spacing:0px;color:#d8f59a;white-space:nowrap;">0.50</div><div class="a" style="left:765.65px;transform:translateX(-50%);top:933.03px;font-size:12.5px;line-height:1;font-weight:normal;letter-spacing:0px;color:#d8f59a;white-space:nowrap;">0.55</div><div class="a" style="left:801.0px;transform:translateX(-50%);top:933.03px;font-size:12.5px;line-height:1;font-weight:normal;letter-spacing:0px;color:#d8f59a;white-space:nowrap;">0.60</div><div class="a" style="left:835.95px;transform:translateX(-50%);top:933.03px;font-size:12.5px;line-height:1;font-weight:normal;letter-spacing:0px;color:#d8f59a;white-space:nowrap;">0.65</div><div class="a" style="left:870.95px;transform:translateX(-50%);top:933.03px;font-size:12.5px;line-height:1;font-weight:normal;letter-spacing:0px;color:#d8f59a;white-space:nowrap;">0.70</div><div class="a" style="left:906.0px;transform:translateX(-50%);top:933.03px;font-size:12.5px;line-height:1;font-weight:normal;letter-spacing:0px;color:#d8f59a;white-space:nowrap;">0.75</div><div class="a" style="left:941.0px;transform:translateX(-50%);top:933.03px;font-size:12.5px;line-height:1;font-weight:normal;letter-spacing:0px;color:#d8f59a;white-space:nowrap;">0.80</div><div class="a" style="left:975.5px;transform:translateX(-50%);top:933.03px;font-size:12.5px;line-height:1;font-weight:normal;letter-spacing:0px;color:#d8f59a;white-space:nowrap;">0.85</div><div class="a" style="left:1009.5px;transform:translateX(-50%);top:933.03px;font-size:12.5px;line-height:1;font-weight:normal;letter-spacing:0px;color:#d8f59a;white-space:nowrap;">0.90</div><div class="a" style="left:1043.5px;transform:translateX(-50%);top:933.03px;font-size:12.5px;line-height:1;font-weight:normal;letter-spacing:0px;color:#d8f59a;white-space:nowrap;">0.95</div><div class="a" style="left:1077.35px;transform:translateX(-50%);top:933.03px;font-size:12.5px;line-height:1;font-weight:normal;letter-spacing:0px;color:#d8f59a;white-space:nowrap;">1.00</div><div class="a" style="left:1111.0px;transform:translateX(-50%);top:933.03px;font-size:12.5px;line-height:1;font-weight:normal;letter-spacing:0px;color:#d8f59a;white-space:nowrap;">1.05</div><div class="a" style="left:1144.8px;transform:translateX(-50%);top:933.03px;font-size:12.5px;line-height:1;font-weight:normal;letter-spacing:0px;color:#d8f59a;white-space:nowrap;">1.10</div><div class="a" style="left:1178.8px;transform:translateX(-50%);top:933.03px;font-size:12.5px;line-height:1;font-weight:normal;letter-spacing:0px;color:#d8f59a;white-space:nowrap;">1.15</div><div class="a" style="left:1212.8px;transform:translateX(-50%);top:933.03px;font-size:12.5px;line-height:1;font-weight:normal;letter-spacing:0px;color:#d8f59a;white-space:nowrap;">1.20</div><div class="a" style="left:1246.8px;transform:translateX(-50%);top:933.03px;font-size:12.5px;line-height:1;font-weight:normal;letter-spacing:0px;color:#d8f59a;white-space:nowrap;">1.25</div><div class="a" style="left:1280.8px;transform:translateX(-50%);top:933.03px;font-size:12.5px;line-height:1;font-weight:normal;letter-spacing:0px;color:#d8f59a;white-space:nowrap;">1.30</div><div class="a" style="left:1314.8px;transform:translateX(-50%);top:933.03px;font-size:12.5px;line-height:1;font-weight:normal;letter-spacing:0px;color:#d8f59a;white-space:nowrap;">1.35</div><div class="a" style="left:1348.8px;transform:translateX(-50%);top:933.03px;font-size:12.5px;line-height:1;font-weight:normal;letter-spacing:0px;color:#d8f59a;white-space:nowrap;">1.40</div><div class="a" style="left:1382.65px;transform:translateX(-50%);top:933.03px;font-size:12.5px;line-height:1;font-weight:normal;letter-spacing:0px;color:#d8f59a;white-space:nowrap;">1.45</div><div class="a" style="left:1416.25px;transform:translateX(-50%);top:933.03px;font-size:12.5px;line-height:1;font-weight:normal;letter-spacing:0px;color:#d8f59a;white-space:nowrap;">1.50</div><div class="a" style="right:1142.4px;top:900.27px;font-size:13px;line-height:1;font-weight:bold;letter-spacing:0.6px;color:#0000f0;white-space:nowrap;-webkit-text-stroke:0.35px #0000f0;">Timing</div><div class="a" style="right:1142.7px;top:929.91px;font-size:13.5px;line-height:1;font-weight:bold;letter-spacing:0.3px;color:#fff;white-space:nowrap;-webkit-text-stroke:0.35px #fff;">Time</div>
</div></div>
</body></html>
